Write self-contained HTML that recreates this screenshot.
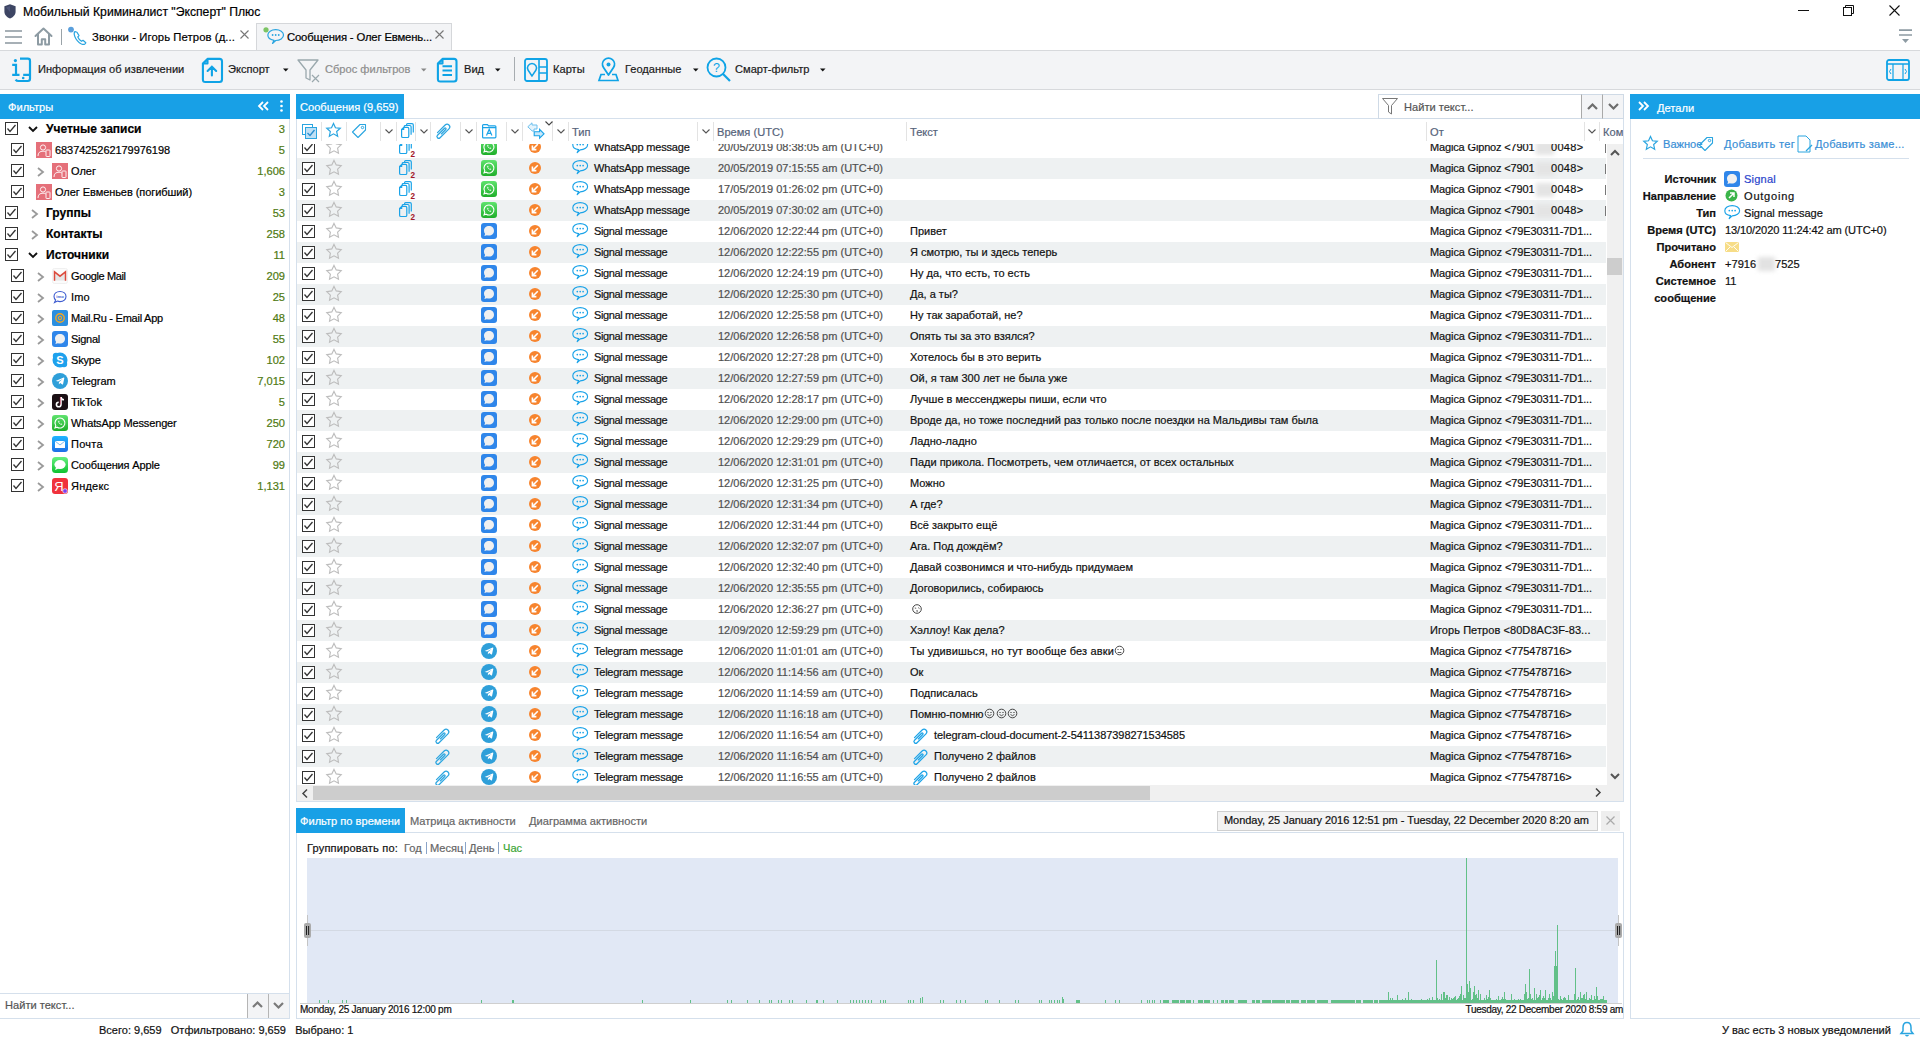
<!DOCTYPE html><html><head><meta charset="utf-8"><style>
html,body{margin:0;padding:0;}
body{width:1920px;height:1040px;position:relative;overflow:hidden;background:#fff;font-family:"Liberation Sans",sans-serif;font-size:11px;color:#000;-webkit-text-stroke:0.2px currentColor;}
div{box-sizing:border-box;}
svg{overflow:visible}
</style></head><body>
<svg style="position:absolute;left:4px;top:4px" width="12" height="15" viewBox="0 0 12 15"><path d="M6 0.3 L11.6 2.3 V7.5 C11.6 11 9 13.3 6 14.6 C3 13.3 0.4 11 0.4 7.5 V2.3 Z" fill="#3d4563"/><path d="M2 3.5 L6 2 V8 Z" fill="#5a6388" opacity="0.6"/></svg>
<div style="position:absolute;left:23px;top:4.0px;line-height:16px;font-size:12.2px;color:#000;font-weight:normal;white-space:nowrap;">Мобильный Криминалист &quot;Эксперт&quot; Плюс</div>
<div style="position:absolute;left:1798px;top:10px;width:11px;height:1px;background:#111"></div>
<svg style="position:absolute;left:1843px;top:5px" width="11" height="11" viewBox="0 0 11 11"><rect x="0.5" y="2.5" width="8" height="8" fill="none" stroke="#111"/><path d="M2.5 2.5 V0.5 H10.5 V8.5 H8.5" fill="none" stroke="#111"/></svg>
<svg style="position:absolute;left:1889px;top:5px" width="11" height="11" viewBox="0 0 11 11"><path d="M0.5 0.5 L10.5 10.5 M10.5 0.5 L0.5 10.5" stroke="#111" stroke-width="1.1"/></svg>
<svg style="position:absolute;left:5px;top:30px" width="17" height="14" viewBox="0 0 17 14"><path d="M0 1 H17 M0 7 H17 M0 13 H17" stroke="#8a979e" stroke-width="1.6"/></svg>
<svg style="position:absolute;left:34px;top:27px" width="20" height="19" viewBox="0 0 20 19"><path d="M1.5 9 L9.5 1.5 L17.5 9 M4 7 V17.5 H7.8 V12.2 H11.2 V17.5 H15 V7" fill="none" stroke="#8d9ba3" stroke-width="2" stroke-linejoin="round" stroke-linecap="round"/></svg>
<div style="position:absolute;left:61px;top:29px;width:1px;height:16px;background:#9aa3a8"></div>
<svg style="position:absolute;left:68px;top:27px" width="20" height="20" viewBox="0 0 20 20"><circle cx="3" cy="2.6" r="2.9" fill="#5a9fdc"/><path d="M7 4.5 C6 5.5 5.8 7 6.8 9.5 C8 12.5 10.5 15.5 13.5 17 C15 17.7 16.2 17.6 17 16.8 L17.8 15.8 L15 13.3 L13.5 14.3 C12 13.5 10.5 11.6 9.8 10 L11 8.6 L9 5.2 Z" fill="none" stroke="#2aa5e0" stroke-width="1.2" stroke-linejoin="round"/></svg>
<div style="position:absolute;left:92px;top:29.0px;line-height:16px;font-size:11.3px;color:#000;font-weight:normal;white-space:nowrap;letter-spacing:0.082px;">Звонки - Игорь Петров (д...</div>
<svg style="position:absolute;left:240px;top:30px" width="9" height="9" viewBox="0 0 9 9"><path d="M0.5 0.5 L8.5 8.5 M8.5 0.5 L0.5 8.5" stroke="#777" stroke-width="1.1"/></svg>
<div style="position:absolute;left:256px;top:23px;width:196px;height:28px;background:#f3f4f6;border:1px solid #d5d7da;border-bottom:none"></div>
<svg style="position:absolute;left:262px;top:26px" width="20" height="20" viewBox="0 0 20 20"><circle cx="4" cy="3.8" r="2.6" fill="#7cc464"/></svg>
<svg style="position:absolute;left:267px;top:29px" width="18" height="16" viewBox="0 0 17 15"><path d="M6.6 10.6 C3.5 10.2 0.8 8.3 0.8 5.7 C0.8 2.8 4.1 0.6 8.2 0.6 C12.3 0.6 15.6 2.8 15.6 5.7 C15.6 8.6 12.3 10.8 8.2 10.8 L5.2 13.6 Z" fill="none" stroke="#2aa5e0" stroke-width="1.15" stroke-linejoin="round"/><circle cx="5.3" cy="5.6" r="0.85" fill="#2aa5e0"/><circle cx="8.2" cy="5.6" r="0.85" fill="#2aa5e0"/><circle cx="11.1" cy="5.6" r="0.85" fill="#2aa5e0"/></svg>
<div style="position:absolute;left:287px;top:29.0px;line-height:16px;font-size:11.3px;color:#000;font-weight:normal;white-space:nowrap;letter-spacing:-0.160px;">Сообщения - Олег Евмень...</div>
<svg style="position:absolute;left:435px;top:30px" width="9" height="9" viewBox="0 0 9 9"><path d="M0.5 0.5 L8.5 8.5 M8.5 0.5 L0.5 8.5" stroke="#777" stroke-width="1.1"/></svg>
<svg style="position:absolute;left:1899px;top:29px" width="14" height="16" viewBox="0 0 14 16"><path d="M0 1.2 H13 M0 6 H13" stroke="#8d9ba3" stroke-width="1.7"/><path d="M3 10 H10 L6.5 14 Z" fill="#8d9ba3"/></svg>
<div style="position:absolute;left:0px;top:50px;width:1920px;height:40px;background:#f3f4f6;border-top:1px solid #d7d9dc;border-bottom:1px solid #d7d9dc"></div>
<svg style="position:absolute;left:11px;top:57px" width="22" height="26" viewBox="0 0 22 26"><circle cx="4.4" cy="3.6" r="1.6" fill="#0fa3e6"/><path d="M1.2 7.8 H5 V17.8 M1.2 17.8 H8.5 M12.2 17.8 H19" fill="none" stroke="#0fa3e6" stroke-width="2.2"/><path d="M9 1.7 H16.8 Q19 1.7 19 3.9 V21.8 Q19 24 16.8 24 H7.4 Q5.6 24 4.6 22.6" fill="none" stroke="#0fa3e6" stroke-width="2.2"/><circle cx="12.2" cy="21" r="1.3" fill="#0fa3e6"/></svg>
<div style="position:absolute;left:38px;top:61.0px;line-height:16px;font-size:11.1px;color:#1b1b1b;font-weight:normal;white-space:nowrap;">Информация об извлечении</div>
<svg style="position:absolute;left:201px;top:57px" width="23" height="27" viewBox="0 0 23 27"><path d="M6.5 1.9 H18.5 Q21 1.9 21 4.4 V22.5 Q21 25 18.5 25 H4.4 Q1.9 25 1.9 22.5 V6.5 Z M1.9 6.5 H6.5 V1.9" fill="none" stroke="#0fa3e6" stroke-width="2.1" stroke-linejoin="round"/><path d="M10.9 18.5 V9.8 M6.6 14 L10.9 9.7 L15.2 14" fill="none" stroke="#0fa3e6" stroke-width="2.1" stroke-linecap="round"/></svg>
<div style="position:absolute;left:228px;top:61.0px;line-height:16px;font-size:11.1px;color:#1b1b1b;font-weight:normal;white-space:nowrap;">Экспорт</div>
<svg style="position:absolute;left:282px;top:68px" width="7" height="4" viewBox="0 0 7 4"><path d="M1 0.5 H6.5 L3.75 3.5 Z" fill="#111"/></svg>
<svg style="position:absolute;left:297px;top:59px" width="24" height="23" viewBox="0 0 24 23"><path d="M1 1 H21 L13 11 V21 L9 19 V11 Z" fill="none" stroke="#9aa8ad" stroke-width="1.3" stroke-linejoin="round"/><path d="M15 16 L22 23 M22 16 L15 23" stroke="#9aa8ad" stroke-width="1.2"/></svg>
<div style="position:absolute;left:325px;top:61.0px;line-height:16px;font-size:11.1px;color:#8d8d8d;font-weight:normal;white-space:nowrap;">Сброс фильтров</div>
<svg style="position:absolute;left:420px;top:68px" width="7" height="4" viewBox="0 0 7 4"><path d="M1 0.5 H6.5 L3.75 3.5 Z" fill="#888"/></svg>
<svg style="position:absolute;left:436px;top:57px" width="23" height="27" viewBox="0 0 23 27"><path d="M6.5 1.9 H18 Q20.5 1.9 20.5 4.4 V22 Q20.5 24.5 18 24.5 H4.4 Q1.9 24.5 1.9 22 V6.5 Z M1.9 6.5 H6.5 V1.9" fill="none" stroke="#0fa3e6" stroke-width="2.1" stroke-linejoin="round"/><path d="M6.5 9.2 H16 M6.5 13.6 H16 M6.5 18 H16" stroke="#0fa3e6" stroke-width="2"/></svg>
<div style="position:absolute;left:464px;top:61.0px;line-height:16px;font-size:11.1px;color:#1b1b1b;font-weight:normal;white-space:nowrap;">Вид</div>
<svg style="position:absolute;left:494px;top:68px" width="7" height="4" viewBox="0 0 7 4"><path d="M1 0.5 H6.5 L3.75 3.5 Z" fill="#111"/></svg>
<div style="position:absolute;left:514px;top:57px;width:1px;height:24px;background:#a7acb0"></div>
<svg style="position:absolute;left:524px;top:58px" width="24" height="24" viewBox="0 0 24 24"><rect x="1" y="1" width="22" height="22" rx="2" fill="none" stroke="#0fa3e6" stroke-width="1.8"/><path d="M15 1 V23 M15 9 H23 M15 15 H23" stroke="#0fa3e6" stroke-width="1.6"/><path d="M8 18 L4 12 A4.5 4.5 0 1 1 12 12 Z" fill="none" stroke="#0fa3e6" stroke-width="1.5"/></svg>
<div style="position:absolute;left:553px;top:61.0px;line-height:16px;font-size:11.1px;color:#1b1b1b;font-weight:normal;white-space:nowrap;">Карты</div>
<svg style="position:absolute;left:598px;top:57px" width="21" height="25" viewBox="0 0 21 25"><path d="M10.5 18 L5.5 10.5 A6 6 0 1 1 15.5 10.5 Z" fill="none" stroke="#0fa3e6" stroke-width="1.8" stroke-linejoin="round"/><circle cx="10.5" cy="7.5" r="2" fill="#0fa3e6"/><path d="M7 17.5 H3 L1 23.5 H20 L18 17.5 H14" fill="none" stroke="#0fa3e6" stroke-width="1.7"/></svg>
<div style="position:absolute;left:625px;top:61.0px;line-height:16px;font-size:11.1px;color:#1b1b1b;font-weight:normal;white-space:nowrap;">Геоданные</div>
<svg style="position:absolute;left:692px;top:68px" width="7" height="4" viewBox="0 0 7 4"><path d="M1 0.5 H6.5 L3.75 3.5 Z" fill="#111"/></svg>
<svg style="position:absolute;left:706px;top:57px" width="26" height="26" viewBox="0 0 26 26"><circle cx="10.5" cy="10.5" r="9" fill="none" stroke="#0fa3e6" stroke-width="1.8"/><path d="M16.8 16.8 L24 24" stroke="#0fa3e6" stroke-width="2.2"/><text x="10.5" y="14.8" text-anchor="middle" font-family="Liberation Sans" font-size="12.5" fill="#0fa3e6">?</text></svg>
<div style="position:absolute;left:735px;top:61.0px;line-height:16px;font-size:11.1px;color:#1b1b1b;font-weight:normal;white-space:nowrap;">Смарт-фильтр</div>
<svg style="position:absolute;left:819px;top:68px" width="7" height="4" viewBox="0 0 7 4"><path d="M1 0.5 H6.5 L3.75 3.5 Z" fill="#111"/></svg>
<svg style="position:absolute;left:1886px;top:59px" width="24" height="22" viewBox="0 0 24 22"><rect x="1" y="1" width="22" height="20" rx="2" fill="none" stroke="#0fa3e6" stroke-width="1.8"/><path d="M1 5 H23" stroke="#0fa3e6" stroke-width="1.5"/><path d="M7 5 V21 M17 5 V21" stroke="#0fa3e6" stroke-width="1.2"/><path d="M5 10 L3.5 12.5 L5 15 M19 10 L20.5 12.5 L19 15" fill="none" stroke="#0fa3e6" stroke-width="1"/></svg>
<div style="position:absolute;left:0px;top:94px;width:290px;height:925px;background:#fff;border-right:1px solid #d5e0ec;border-bottom:1px solid #d5e0ec"></div>
<div style="position:absolute;left:0px;top:94px;width:290px;height:25px;background:#18a0e6"></div>
<div style="position:absolute;left:8px;top:99.0px;line-height:16px;font-size:11.1px;color:#fff;font-weight:normal;white-space:nowrap;">Фильтры</div>
<svg style="position:absolute;left:257px;top:101px" width="13" height="10" viewBox="0 0 13 10"><path d="M6 1 L2 5 L6 9 M11 1 L7 5 L11 9" fill="none" stroke="#fff" stroke-width="1.8"/></svg>
<svg style="position:absolute;left:280px;top:100px" width="3" height="12" viewBox="0 0 3 12"><circle cx="1.5" cy="1.5" r="1.3" fill="#fff"/><circle cx="1.5" cy="6" r="1.3" fill="#fff"/><circle cx="1.5" cy="10.5" r="1.3" fill="#fff"/></svg>
<svg style="position:absolute;left:5px;top:122px" width="13" height="13" viewBox="0 0 13 13"><rect x="0.5" y="0.5" width="12" height="12" fill="#fff" stroke="#333" stroke-width="1"/><path d="M2.5 6.5 L5 9.5 L10.5 3" fill="none" stroke="#333" stroke-width="1.3"/></svg>
<svg style="position:absolute;left:28px;top:126px" width="10" height="6" viewBox="0 0 10 6"><path d="M1 1 L5.0 5 L9 1" fill="none" stroke="#111" stroke-width="1.9"/></svg>
<div style="position:absolute;left:46px;top:120.5px;line-height:16px;font-size:12px;color:#000;font-weight:bold;white-space:nowrap;">Учетные записи</div>
<div style="position:absolute;right:1635px;top:120.5px;line-height:16px;font-size:11.1px;color:#4f7a12;font-weight:normal;white-space:nowrap;text-align:right;">3</div>
<svg style="position:absolute;left:11px;top:143px" width="13" height="13" viewBox="0 0 13 13"><rect x="0.5" y="0.5" width="12" height="12" fill="#fff" stroke="#333" stroke-width="1"/><path d="M2.5 6.5 L5 9.5 L10.5 3" fill="none" stroke="#333" stroke-width="1.3"/></svg>
<svg style="position:absolute;left:36px;top:142.0px" width="16" height="16" viewBox="0 0 16 16"><rect width="16" height="16" fill="#e5707a"/><circle cx="7" cy="5.5" r="2.6" fill="none" stroke="#fff" stroke-width="0.9"/><path d="M2 14 C2 10.5 4 9.2 7 9.2 C8.5 9.2 9.3 9.6 9.8 10" fill="none" stroke="#fff" stroke-width="0.9"/><rect x="10" y="8" width="4" height="6.5" rx="0.6" fill="none" stroke="#fff" stroke-width="0.9"/></svg>
<div style="position:absolute;left:55px;top:141.5px;line-height:16px;font-size:11px;color:#000;font-weight:normal;white-space:nowrap;letter-spacing:-0.066px;">6837425262179976198</div>
<div style="position:absolute;right:1635px;top:141.5px;line-height:16px;font-size:11.1px;color:#4f7a12;font-weight:normal;white-space:nowrap;text-align:right;">5</div>
<svg style="position:absolute;left:11px;top:164px" width="13" height="13" viewBox="0 0 13 13"><rect x="0.5" y="0.5" width="12" height="12" fill="#fff" stroke="#333" stroke-width="1"/><path d="M2.5 6.5 L5 9.5 L10.5 3" fill="none" stroke="#333" stroke-width="1.3"/></svg>
<svg style="position:absolute;left:37px;top:166.7px" width="7" height="10" viewBox="0 0 7 10"><path d="M1 1 L6 5.0 L1 9" fill="none" stroke="#9a9a9a" stroke-width="1.8"/></svg>
<svg style="position:absolute;left:52px;top:163.0px" width="16" height="16" viewBox="0 0 16 16"><rect width="16" height="16" fill="#e5707a"/><circle cx="7" cy="5.5" r="2.6" fill="none" stroke="#fff" stroke-width="0.9"/><path d="M2 14 C2 10.5 4 9.2 7 9.2 C8.5 9.2 9.3 9.6 9.8 10" fill="none" stroke="#fff" stroke-width="0.9"/><rect x="10" y="8" width="4" height="6.5" rx="0.6" fill="none" stroke="#fff" stroke-width="0.9"/></svg>
<div style="position:absolute;left:71px;top:162.5px;line-height:16px;font-size:11px;color:#000;font-weight:normal;white-space:nowrap;">Олег</div>
<div style="position:absolute;right:1635px;top:162.5px;line-height:16px;font-size:11.1px;color:#4f7a12;font-weight:normal;white-space:nowrap;text-align:right;">1,606</div>
<svg style="position:absolute;left:11px;top:185px" width="13" height="13" viewBox="0 0 13 13"><rect x="0.5" y="0.5" width="12" height="12" fill="#fff" stroke="#333" stroke-width="1"/><path d="M2.5 6.5 L5 9.5 L10.5 3" fill="none" stroke="#333" stroke-width="1.3"/></svg>
<svg style="position:absolute;left:36px;top:184.0px" width="16" height="16" viewBox="0 0 16 16"><rect width="16" height="16" fill="#e5707a"/><circle cx="7" cy="5.5" r="2.6" fill="none" stroke="#fff" stroke-width="0.9"/><path d="M2 14 C2 10.5 4 9.2 7 9.2 C8.5 9.2 9.3 9.6 9.8 10" fill="none" stroke="#fff" stroke-width="0.9"/><rect x="10" y="8" width="4" height="6.5" rx="0.6" fill="none" stroke="#fff" stroke-width="0.9"/></svg>
<div style="position:absolute;left:55px;top:183.5px;line-height:16px;font-size:11px;color:#000;font-weight:normal;white-space:nowrap;letter-spacing:-0.066px;">Олег Евменьев (погибший)</div>
<div style="position:absolute;right:1635px;top:183.5px;line-height:16px;font-size:11.1px;color:#4f7a12;font-weight:normal;white-space:nowrap;text-align:right;">3</div>
<svg style="position:absolute;left:5px;top:206px" width="13" height="13" viewBox="0 0 13 13"><rect x="0.5" y="0.5" width="12" height="12" fill="#fff" stroke="#333" stroke-width="1"/><path d="M2.5 6.5 L5 9.5 L10.5 3" fill="none" stroke="#333" stroke-width="1.3"/></svg>
<svg style="position:absolute;left:31px;top:208.7px" width="7" height="10" viewBox="0 0 7 10"><path d="M1 1 L6 5.0 L1 9" fill="none" stroke="#9a9a9a" stroke-width="1.8"/></svg>
<div style="position:absolute;left:46px;top:204.5px;line-height:16px;font-size:12px;color:#000;font-weight:bold;white-space:nowrap;">Группы</div>
<div style="position:absolute;right:1635px;top:204.5px;line-height:16px;font-size:11.1px;color:#4f7a12;font-weight:normal;white-space:nowrap;text-align:right;">53</div>
<svg style="position:absolute;left:5px;top:227px" width="13" height="13" viewBox="0 0 13 13"><rect x="0.5" y="0.5" width="12" height="12" fill="#fff" stroke="#333" stroke-width="1"/><path d="M2.5 6.5 L5 9.5 L10.5 3" fill="none" stroke="#333" stroke-width="1.3"/></svg>
<svg style="position:absolute;left:31px;top:229.7px" width="7" height="10" viewBox="0 0 7 10"><path d="M1 1 L6 5.0 L1 9" fill="none" stroke="#9a9a9a" stroke-width="1.8"/></svg>
<div style="position:absolute;left:46px;top:225.5px;line-height:16px;font-size:12px;color:#000;font-weight:bold;white-space:nowrap;">Контакты</div>
<div style="position:absolute;right:1635px;top:225.5px;line-height:16px;font-size:11.1px;color:#4f7a12;font-weight:normal;white-space:nowrap;text-align:right;">258</div>
<svg style="position:absolute;left:5px;top:248px" width="13" height="13" viewBox="0 0 13 13"><rect x="0.5" y="0.5" width="12" height="12" fill="#fff" stroke="#333" stroke-width="1"/><path d="M2.5 6.5 L5 9.5 L10.5 3" fill="none" stroke="#333" stroke-width="1.3"/></svg>
<svg style="position:absolute;left:28px;top:252px" width="10" height="6" viewBox="0 0 10 6"><path d="M1 1 L5.0 5 L9 1" fill="none" stroke="#111" stroke-width="1.9"/></svg>
<div style="position:absolute;left:46px;top:246.5px;line-height:16px;font-size:12px;color:#000;font-weight:bold;white-space:nowrap;">Источники</div>
<div style="position:absolute;right:1635px;top:246.5px;line-height:16px;font-size:11.1px;color:#4f7a12;font-weight:normal;white-space:nowrap;text-align:right;">11</div>
<svg style="position:absolute;left:11px;top:269px" width="13" height="13" viewBox="0 0 13 13"><rect x="0.5" y="0.5" width="12" height="12" fill="#fff" stroke="#333" stroke-width="1"/><path d="M2.5 6.5 L5 9.5 L10.5 3" fill="none" stroke="#333" stroke-width="1.3"/></svg>
<svg style="position:absolute;left:37px;top:271.7px" width="7" height="10" viewBox="0 0 7 10"><path d="M1 1 L6 5.0 L1 9" fill="none" stroke="#9a9a9a" stroke-width="1.8"/></svg>
<svg style="position:absolute;left:52px;top:268.0px" width="16" height="16" viewBox="0 0 16 16"><rect x="0.5" y="0.5" width="15" height="15" rx="2" fill="#fbfbfb" stroke="#f0f0f0"/><path d="M2.5 4.5 L8 8.8 L13.5 4.5 V12.5 H2.5 Z" fill="#e6e6e6"/><path d="M2.5 12.8 V3.8 L8 8.2 L13.5 3.8 V12.8" fill="none" stroke="#dc4a3c" stroke-width="1.5" stroke-linejoin="miter"/></svg>
<div style="position:absolute;left:71px;top:267.5px;line-height:16px;font-size:11px;color:#000;font-weight:normal;white-space:nowrap;letter-spacing:-0.373px;">Google Mail</div>
<div style="position:absolute;right:1635px;top:267.5px;line-height:16px;font-size:11.1px;color:#4f7a12;font-weight:normal;white-space:nowrap;text-align:right;">209</div>
<svg style="position:absolute;left:11px;top:290px" width="13" height="13" viewBox="0 0 13 13"><rect x="0.5" y="0.5" width="12" height="12" fill="#fff" stroke="#333" stroke-width="1"/><path d="M2.5 6.5 L5 9.5 L10.5 3" fill="none" stroke="#333" stroke-width="1.3"/></svg>
<svg style="position:absolute;left:37px;top:292.7px" width="7" height="10" viewBox="0 0 7 10"><path d="M1 1 L6 5.0 L1 9" fill="none" stroke="#9a9a9a" stroke-width="1.8"/></svg>
<svg style="position:absolute;left:52px;top:289.0px" width="16" height="16" viewBox="0 0 16 16"><path d="M8 2.5 C11.6 2.5 14 4.8 14 7.6 C14 10.4 11.6 12.6 8 12.6 C7 12.6 6.1 12.4 5.4 12.1 L2.5 13.5 L3.6 11 C2.6 10.1 2 9 2 7.6 C2 4.8 4.4 2.5 8 2.5 Z" fill="none" stroke="#3d5bd0" stroke-width="1.1"/><text x="8" y="9.3" text-anchor="middle" font-family="Liberation Sans" font-size="4.2" font-weight="bold" fill="#3d5bd0">imo</text></svg>
<div style="position:absolute;left:71px;top:288.5px;line-height:16px;font-size:11px;color:#000;font-weight:normal;white-space:nowrap;letter-spacing:0.152px;">Imo</div>
<div style="position:absolute;right:1635px;top:288.5px;line-height:16px;font-size:11.1px;color:#4f7a12;font-weight:normal;white-space:nowrap;text-align:right;">25</div>
<svg style="position:absolute;left:11px;top:311px" width="13" height="13" viewBox="0 0 13 13"><rect x="0.5" y="0.5" width="12" height="12" fill="#fff" stroke="#333" stroke-width="1"/><path d="M2.5 6.5 L5 9.5 L10.5 3" fill="none" stroke="#333" stroke-width="1.3"/></svg>
<svg style="position:absolute;left:37px;top:313.7px" width="7" height="10" viewBox="0 0 7 10"><path d="M1 1 L6 5.0 L1 9" fill="none" stroke="#9a9a9a" stroke-width="1.8"/></svg>
<svg style="position:absolute;left:52px;top:310.0px" width="16" height="16" viewBox="0 0 16 16"><rect width="16" height="16" rx="2" fill="#2b8fe0"/><circle cx="8" cy="8" r="4.2" fill="none" stroke="#f5a623" stroke-width="1.4"/><circle cx="8" cy="8" r="1.6" fill="none" stroke="#f5a623" stroke-width="1.1"/></svg>
<div style="position:absolute;left:71px;top:309.5px;line-height:16px;font-size:11px;color:#000;font-weight:normal;white-space:nowrap;letter-spacing:-0.247px;">Mail.Ru - Email App</div>
<div style="position:absolute;right:1635px;top:309.5px;line-height:16px;font-size:11.1px;color:#4f7a12;font-weight:normal;white-space:nowrap;text-align:right;">48</div>
<svg style="position:absolute;left:11px;top:332px" width="13" height="13" viewBox="0 0 13 13"><rect x="0.5" y="0.5" width="12" height="12" fill="#fff" stroke="#333" stroke-width="1"/><path d="M2.5 6.5 L5 9.5 L10.5 3" fill="none" stroke="#333" stroke-width="1.3"/></svg>
<svg style="position:absolute;left:37px;top:334.7px" width="7" height="10" viewBox="0 0 7 10"><path d="M1 1 L6 5.0 L1 9" fill="none" stroke="#9a9a9a" stroke-width="1.8"/></svg>
<svg style="position:absolute;left:52px;top:331.0px" width="16" height="16" viewBox="0 0 16 16"><rect x="0" y="0" width="16" height="16" rx="3" fill="#2f86ea"/><path d="M8 3 C10.9 3 13 5 13 7.8 C13 10.6 10.9 12.6 8 12.6 C7.2 12.6 6.5 12.45 5.9 12.2 L3.4 13 L4.1 10.8 C3.4 10 3 9 3 7.8 C3 5 5.1 3 8 3 Z" fill="#f0f0f0"/></svg>
<div style="position:absolute;left:71px;top:330.5px;line-height:16px;font-size:11px;color:#000;font-weight:normal;white-space:nowrap;letter-spacing:-0.280px;">Signal</div>
<div style="position:absolute;right:1635px;top:330.5px;line-height:16px;font-size:11.1px;color:#4f7a12;font-weight:normal;white-space:nowrap;text-align:right;">55</div>
<svg style="position:absolute;left:11px;top:353px" width="13" height="13" viewBox="0 0 13 13"><rect x="0.5" y="0.5" width="12" height="12" fill="#fff" stroke="#333" stroke-width="1"/><path d="M2.5 6.5 L5 9.5 L10.5 3" fill="none" stroke="#333" stroke-width="1.3"/></svg>
<svg style="position:absolute;left:37px;top:355.7px" width="7" height="10" viewBox="0 0 7 10"><path d="M1 1 L6 5.0 L1 9" fill="none" stroke="#9a9a9a" stroke-width="1.8"/></svg>
<svg style="position:absolute;left:52px;top:352.0px" width="16" height="16" viewBox="0 0 16 16"><circle cx="8" cy="8" r="7.5" fill="#1ea1ed"/><circle cx="4" cy="4" r="3.2" fill="#1ea1ed"/><circle cx="12" cy="12" r="3.2" fill="#1ea1ed"/><text x="8" y="12" text-anchor="middle" font-family="Liberation Sans" font-size="11" font-weight="bold" fill="#fff">S</text></svg>
<div style="position:absolute;left:71px;top:351.5px;line-height:16px;font-size:11px;color:#000;font-weight:normal;white-space:nowrap;letter-spacing:-0.156px;">Skype</div>
<div style="position:absolute;right:1635px;top:351.5px;line-height:16px;font-size:11.1px;color:#4f7a12;font-weight:normal;white-space:nowrap;text-align:right;">102</div>
<svg style="position:absolute;left:11px;top:374px" width="13" height="13" viewBox="0 0 13 13"><rect x="0.5" y="0.5" width="12" height="12" fill="#fff" stroke="#333" stroke-width="1"/><path d="M2.5 6.5 L5 9.5 L10.5 3" fill="none" stroke="#333" stroke-width="1.3"/></svg>
<svg style="position:absolute;left:37px;top:376.7px" width="7" height="10" viewBox="0 0 7 10"><path d="M1 1 L6 5.0 L1 9" fill="none" stroke="#9a9a9a" stroke-width="1.8"/></svg>
<svg style="position:absolute;left:52px;top:373.0px" width="16" height="16" viewBox="0 0 16 16"><circle cx="8" cy="8" r="8" fill="#2e9fd9"/><path d="M3.6 7.9 L11.7 4.6 C12.1 4.5 12.4 4.7 12.3 5.2 L11 11.2 C10.9 11.6 10.6 11.7 10.3 11.5 L8.2 10 L7.2 11 C7.1 11.1 7 11.2 6.8 11.2 L7 9.1 L10.6 5.9 L6.1 8.6 L4 8 C3.5 7.9 3.5 8.1 3.6 7.9Z" fill="#fff"/></svg>
<div style="position:absolute;left:71px;top:372.5px;line-height:16px;font-size:11px;color:#000;font-weight:normal;white-space:nowrap;letter-spacing:-0.094px;">Telegram</div>
<div style="position:absolute;right:1635px;top:372.5px;line-height:16px;font-size:11.1px;color:#4f7a12;font-weight:normal;white-space:nowrap;text-align:right;">7,015</div>
<svg style="position:absolute;left:11px;top:395px" width="13" height="13" viewBox="0 0 13 13"><rect x="0.5" y="0.5" width="12" height="12" fill="#fff" stroke="#333" stroke-width="1"/><path d="M2.5 6.5 L5 9.5 L10.5 3" fill="none" stroke="#333" stroke-width="1.3"/></svg>
<svg style="position:absolute;left:37px;top:397.7px" width="7" height="10" viewBox="0 0 7 10"><path d="M1 1 L6 5.0 L1 9" fill="none" stroke="#9a9a9a" stroke-width="1.8"/></svg>
<svg style="position:absolute;left:52px;top:394.0px" width="16" height="16" viewBox="0 0 16 16"><rect width="16" height="16" rx="3" fill="#1a0f14"/><path d="M9 3 V10.5 A2.3 2.3 0 1 1 6.7 8.2" fill="none" stroke="#fff" stroke-width="1.6"/><path d="M9 3.2 C9.4 4.8 10.5 5.7 12 5.8" fill="none" stroke="#fff" stroke-width="1.5"/><path d="M8.3 3 V10.5" stroke="#ee1d52" stroke-width="0.5"/></svg>
<div style="position:absolute;left:71px;top:393.5px;line-height:16px;font-size:11px;color:#000;font-weight:normal;white-space:nowrap;letter-spacing:-0.096px;">TikTok</div>
<div style="position:absolute;right:1635px;top:393.5px;line-height:16px;font-size:11.1px;color:#4f7a12;font-weight:normal;white-space:nowrap;text-align:right;">5</div>
<svg style="position:absolute;left:11px;top:416px" width="13" height="13" viewBox="0 0 13 13"><rect x="0.5" y="0.5" width="12" height="12" fill="#fff" stroke="#333" stroke-width="1"/><path d="M2.5 6.5 L5 9.5 L10.5 3" fill="none" stroke="#333" stroke-width="1.3"/></svg>
<svg style="position:absolute;left:37px;top:418.7px" width="7" height="10" viewBox="0 0 7 10"><path d="M1 1 L6 5.0 L1 9" fill="none" stroke="#9a9a9a" stroke-width="1.8"/></svg>
<svg style="position:absolute;left:52px;top:415.0px" width="16" height="16" viewBox="0 0 16 16"><defs><linearGradient id="wg" x1="0" y1="0" x2="0" y2="1"><stop offset="0" stop-color="#5fe36e"/><stop offset="1" stop-color="#1fae2a"/></linearGradient></defs><rect x="0" y="0" width="16" height="16" rx="3" fill="url(#wg)"/><path d="M8 3 A5 5 0 1 1 5.2 12.2 L3 12.9 L3.8 10.8 A5 5 0 0 1 8 3 Z" fill="none" stroke="#fff" stroke-width="1.1"/><path d="M6.2 6 C6.2 8 8 9.8 10 9.8 L10.3 9 L9.3 8.5 L8.8 9 C8 8.6 7.4 8 7 7.2 L7.5 6.7 L7 5.7 Z" fill="#fff"/></svg>
<div style="position:absolute;left:71px;top:414.5px;line-height:16px;font-size:11px;color:#000;font-weight:normal;white-space:nowrap;letter-spacing:-0.145px;">WhatsApp Messenger</div>
<div style="position:absolute;right:1635px;top:414.5px;line-height:16px;font-size:11.1px;color:#4f7a12;font-weight:normal;white-space:nowrap;text-align:right;">250</div>
<svg style="position:absolute;left:11px;top:437px" width="13" height="13" viewBox="0 0 13 13"><rect x="0.5" y="0.5" width="12" height="12" fill="#fff" stroke="#333" stroke-width="1"/><path d="M2.5 6.5 L5 9.5 L10.5 3" fill="none" stroke="#333" stroke-width="1.3"/></svg>
<svg style="position:absolute;left:37px;top:439.7px" width="7" height="10" viewBox="0 0 7 10"><path d="M1 1 L6 5.0 L1 9" fill="none" stroke="#9a9a9a" stroke-width="1.8"/></svg>
<svg style="position:absolute;left:52px;top:436.0px" width="16" height="16" viewBox="0 0 16 16"><defs><linearGradient id="pg" x1="0" y1="0" x2="0" y2="1"><stop offset="0" stop-color="#1fb6ff"/><stop offset="1" stop-color="#1e6ee6"/></linearGradient></defs><rect width="16" height="16" rx="3" fill="url(#pg)"/><rect x="3" y="5" width="10" height="7" fill="#fff"/><path d="M3 5 L8 9 L13 5" fill="none" stroke="#5aa9f0" stroke-width="0.8"/></svg>
<div style="position:absolute;left:71px;top:435.5px;line-height:16px;font-size:11px;color:#000;font-weight:normal;white-space:nowrap;letter-spacing:0.251px;">Почта</div>
<div style="position:absolute;right:1635px;top:435.5px;line-height:16px;font-size:11.1px;color:#4f7a12;font-weight:normal;white-space:nowrap;text-align:right;">720</div>
<svg style="position:absolute;left:11px;top:458px" width="13" height="13" viewBox="0 0 13 13"><rect x="0.5" y="0.5" width="12" height="12" fill="#fff" stroke="#333" stroke-width="1"/><path d="M2.5 6.5 L5 9.5 L10.5 3" fill="none" stroke="#333" stroke-width="1.3"/></svg>
<svg style="position:absolute;left:37px;top:460.7px" width="7" height="10" viewBox="0 0 7 10"><path d="M1 1 L6 5.0 L1 9" fill="none" stroke="#9a9a9a" stroke-width="1.8"/></svg>
<svg style="position:absolute;left:52px;top:457.0px" width="16" height="16" viewBox="0 0 16 16"><defs><linearGradient id="ag" x1="0" y1="0" x2="0" y2="1"><stop offset="0" stop-color="#66f080"/><stop offset="1" stop-color="#0ec12f"/></linearGradient></defs><rect width="16" height="16" rx="3.5" fill="url(#ag)"/><ellipse cx="8" cy="7.6" rx="5.6" ry="4.5" fill="#fff"/><path d="M4 10.5 L3 13 L6.5 11.5 Z" fill="#fff"/></svg>
<div style="position:absolute;left:71px;top:456.5px;line-height:16px;font-size:11px;color:#000;font-weight:normal;white-space:nowrap;letter-spacing:-0.146px;">Сообщения Apple</div>
<div style="position:absolute;right:1635px;top:456.5px;line-height:16px;font-size:11.1px;color:#4f7a12;font-weight:normal;white-space:nowrap;text-align:right;">99</div>
<svg style="position:absolute;left:11px;top:479px" width="13" height="13" viewBox="0 0 13 13"><rect x="0.5" y="0.5" width="12" height="12" fill="#fff" stroke="#333" stroke-width="1"/><path d="M2.5 6.5 L5 9.5 L10.5 3" fill="none" stroke="#333" stroke-width="1.3"/></svg>
<svg style="position:absolute;left:37px;top:481.7px" width="7" height="10" viewBox="0 0 7 10"><path d="M1 1 L6 5.0 L1 9" fill="none" stroke="#9a9a9a" stroke-width="1.8"/></svg>
<svg style="position:absolute;left:52px;top:478.0px" width="16" height="16" viewBox="0 0 16 16"><rect width="16" height="16" rx="3" fill="#f0323c"/><text x="7" y="13" text-anchor="middle" font-family="Liberation Sans" font-size="13" fill="#fff">Я</text><circle cx="13" cy="13" r="2.3" fill="#7b3ff2" stroke="#fff" stroke-width="0.6"/></svg>
<div style="position:absolute;left:71px;top:477.5px;line-height:16px;font-size:11px;color:#000;font-weight:normal;white-space:nowrap;letter-spacing:0.217px;">Яндекс</div>
<div style="position:absolute;right:1635px;top:477.5px;line-height:16px;font-size:11.1px;color:#4f7a12;font-weight:normal;white-space:nowrap;text-align:right;">1,131</div>
<div style="position:absolute;left:0px;top:993px;width:289px;height:25px;border-top:1px solid #d5e0ec;background:#fff"></div>
<div style="position:absolute;left:5px;top:997.0px;line-height:16px;font-size:11.1px;color:#555;font-weight:normal;white-space:nowrap;">Найти текст...</div>
<div style="position:absolute;left:247px;top:994px;width:21px;height:24px;background:#f3f4f6;border-left:1px solid #b5b5b5"></div>
<div style="position:absolute;left:268px;top:994px;width:21px;height:24px;background:#f3f4f6;border-left:1px solid #b5b5b5"></div>
<svg style="position:absolute;left:252px;top:1001px" width="11" height="7" viewBox="0 0 11 7"><path d="M1 6 L5.5 1.5 L10 6" fill="none" stroke="#7a7a7a" stroke-width="2.2"/></svg>
<svg style="position:absolute;left:273px;top:1002px" width="11" height="7" viewBox="0 0 11 7"><path d="M1 1 L5.5 5.5 L10 1" fill="none" stroke="#7a7a7a" stroke-width="2.2"/></svg>
<div style="position:absolute;left:296px;top:118px;width:1328px;height:684px;background:#fff;border:1px solid #d5e0ec;"></div>
<div style="position:absolute;left:296px;top:94px;width:108px;height:25px;background:#18a0e6"></div>
<div style="position:absolute;left:300px;top:99.0px;line-height:16px;font-size:11.1px;color:#fff;font-weight:normal;white-space:nowrap;">Сообщения (9,659)</div>
<div style="position:absolute;left:1378px;top:94px;width:246px;height:25px;background:#fff;border:1px solid #cfdae6"></div>
<svg style="position:absolute;left:1382px;top:98px" width="16" height="17" viewBox="0 0 16 17"><path d="M0.5 0.5 H15.5 L9.5 7.5 V16 L6.5 14 V7.5 Z" fill="none" stroke="#777" stroke-width="1" stroke-linejoin="round"/></svg>
<div style="position:absolute;left:1404px;top:98.5px;line-height:16px;font-size:11.1px;color:#555;font-weight:normal;white-space:nowrap;">Найти текст...</div>
<div style="position:absolute;left:1581px;top:94px;width:22px;height:25px;background:#f3f4f6;border-left:1px solid #a9a9a9;border-top:1px solid #cfdae6;border-bottom:1px solid #cfdae6"></div>
<div style="position:absolute;left:1602px;top:94px;width:22px;height:25px;background:#f3f4f6;border:1px solid #cfdae6;border-left:1px solid #a9a9a9"></div>
<svg style="position:absolute;left:1587px;top:103px" width="11" height="7" viewBox="0 0 11 7"><path d="M1 6 L5.5 1.5 L10 6" fill="none" stroke="#6d6d6d" stroke-width="2.2"/></svg>
<svg style="position:absolute;left:1608px;top:103px" width="11" height="7" viewBox="0 0 11 7"><path d="M1 1 L5.5 5.5 L10 1" fill="none" stroke="#6d6d6d" stroke-width="2.2"/></svg>
<div style="position:absolute;left:321px;top:122px;width:1px;height:19px;background:#e3e3e3"></div>
<div style="position:absolute;left:346px;top:122px;width:1px;height:19px;background:#e3e3e3"></div>
<div style="position:absolute;left:380px;top:122px;width:1px;height:19px;background:#e3e3e3"></div>
<div style="position:absolute;left:396px;top:122px;width:1px;height:19px;background:#e3e3e3"></div>
<div style="position:absolute;left:415px;top:122px;width:1px;height:19px;background:#e3e3e3"></div>
<div style="position:absolute;left:430px;top:122px;width:1px;height:19px;background:#e3e3e3"></div>
<div style="position:absolute;left:460px;top:122px;width:1px;height:19px;background:#e3e3e3"></div>
<div style="position:absolute;left:476px;top:122px;width:1px;height:19px;background:#e3e3e3"></div>
<div style="position:absolute;left:506px;top:122px;width:1px;height:19px;background:#e3e3e3"></div>
<div style="position:absolute;left:522px;top:122px;width:1px;height:19px;background:#e3e3e3"></div>
<div style="position:absolute;left:552px;top:122px;width:1px;height:19px;background:#e3e3e3"></div>
<div style="position:absolute;left:568px;top:122px;width:1px;height:19px;background:#e3e3e3"></div>
<div style="position:absolute;left:697px;top:122px;width:1px;height:19px;background:#e3e3e3"></div>
<div style="position:absolute;left:713px;top:122px;width:1px;height:19px;background:#e3e3e3"></div>
<div style="position:absolute;left:906px;top:122px;width:1px;height:19px;background:#e3e3e3"></div>
<div style="position:absolute;left:1426px;top:122px;width:1px;height:19px;background:#e3e3e3"></div>
<div style="position:absolute;left:1584px;top:122px;width:1px;height:19px;background:#e3e3e3"></div>
<div style="position:absolute;left:1599px;top:122px;width:1px;height:19px;background:#e3e3e3"></div>
<svg style="position:absolute;left:302px;top:124px" width="15" height="15" viewBox="0 0 15 15"><rect x="0.5" y="0.5" width="10" height="10" fill="none" stroke="#2aa5e0" stroke-width="1"/><rect x="3.5" y="3.5" width="11" height="11" fill="#bfe0f5" stroke="#2aa5e0" stroke-width="1"/><path d="M5.5 9 L8 11.5 L12.5 6" fill="none" stroke="#2a8fd0" stroke-width="1.4"/></svg>
<svg style="position:absolute;left:326px;top:123px" width="15" height="15" viewBox="0 0 15 15"><polygon points="7.50,0.40 9.46,4.80 14.25,5.31 10.67,8.53 11.67,13.24 7.50,10.84 3.33,13.24 4.33,8.53 0.75,5.31 5.54,4.80" fill="none" stroke="#2aa5e0" stroke-width="1.2" stroke-linejoin="miter"/></svg>
<svg style="position:absolute;left:351px;top:123px" width="16" height="16" viewBox="0 0 16 16"><path d="M14.5 1.5 H9 L1.5 9 L7 14.5 L14.5 7 Z" fill="none" stroke="#2aa5e0" stroke-width="1.1" stroke-linejoin="round"/><circle cx="11.5" cy="4.5" r="1.2" fill="none" stroke="#2aa5e0" stroke-width="1"/></svg>
<svg style="position:absolute;left:384.5px;top:129px" width="8" height="5" viewBox="0 0 8 5"><path d="M0.5 0.5 L4 4 L7.5 0.5" fill="none" stroke="#555" stroke-width="1.1"/></svg>
<svg style="position:absolute;left:419.5px;top:129px" width="8" height="5" viewBox="0 0 8 5"><path d="M0.5 0.5 L4 4 L7.5 0.5" fill="none" stroke="#555" stroke-width="1.1"/></svg>
<svg style="position:absolute;left:464.5px;top:129px" width="8" height="5" viewBox="0 0 8 5"><path d="M0.5 0.5 L4 4 L7.5 0.5" fill="none" stroke="#555" stroke-width="1.1"/></svg>
<svg style="position:absolute;left:510.5px;top:129px" width="8" height="5" viewBox="0 0 8 5"><path d="M0.5 0.5 L4 4 L7.5 0.5" fill="none" stroke="#555" stroke-width="1.1"/></svg>
<svg style="position:absolute;left:556.5px;top:129px" width="8" height="5" viewBox="0 0 8 5"><path d="M0.5 0.5 L4 4 L7.5 0.5" fill="none" stroke="#555" stroke-width="1.1"/></svg>
<svg style="position:absolute;left:701.5px;top:129px" width="8" height="5" viewBox="0 0 8 5"><path d="M0.5 0.5 L4 4 L7.5 0.5" fill="none" stroke="#555" stroke-width="1.1"/></svg>
<svg style="position:absolute;left:1587.5px;top:129px" width="8" height="5" viewBox="0 0 8 5"><path d="M0.5 0.5 L4 4 L7.5 0.5" fill="none" stroke="#555" stroke-width="1.1"/></svg>
<svg style="position:absolute;left:400px;top:123px" width="18" height="18" viewBox="0 0 18 18"><path d="M3.7 4.4 H7.5 Q8.8 4.4 8.8 5.7 V13.2 Q8.8 14.5 7.5 14.5 H2.9 Q1.6 14.5 1.6 13.2 V6.5 Z M1.6 6.5 H3.7 V4.4" fill="none" stroke="#1aa3e8" stroke-width="1.2" stroke-linejoin="round"/><path d="M4.3 4.2 V3.5 Q4.3 2.5 5.3 2.5 H9.8 Q11.1 2.5 11.1 3.8 V11.8" fill="none" stroke="#1aa3e8" stroke-width="1.2"/><path d="M6.6 2.2 V1.8 Q6.6 0.7 7.7 0.7 H12 Q13.3 0.7 13.3 2 V9.5" fill="none" stroke="#1aa3e8" stroke-width="1.2"/></svg>
<svg style="position:absolute;left:435px;top:123px" width="16" height="16" viewBox="0 0 16 16"><path transform="translate(7.6 8.4) rotate(-45) scale(0.9)" d="M-5 -3 H7 A3 3 0 0 1 7 3 H-7 A2 2 0 0 1 -7 -1 H4 A1 1 0 0 1 4 1 H-3" fill="none" stroke="#2aa5e0" stroke-width="1.35" stroke-linecap="round"/></svg>
<svg style="position:absolute;left:481px;top:123px" width="16" height="16" viewBox="0 0 16 16"><path d="M1.6 2.5 Q1.6 1.6 2.5 1.6 H6.5 L7.5 2.8 H14 Q14.9 2.8 14.9 3.7 V13.8 Q14.9 14.8 14 14.8 H2.5 Q1.6 14.8 1.6 13.9 Z M1.6 4.6 H14.9" fill="none" stroke="#1aa3e8" stroke-width="1.2" stroke-linejoin="round"/><path d="M5.5 12.5 L8.2 6.2 L10.9 12.5 M6.5 10.4 H9.9" fill="none" stroke="#1aa3e8" stroke-width="1.2"/></svg>
<svg style="position:absolute;left:527px;top:122px" width="18" height="18" viewBox="0 0 18 18"><path d="M0.8 4.8 L5 0.8 V3 H10 V7 H7 V9 L5 9 V8.8 Z" fill="#e6f4fc" stroke="#6cc0ee" stroke-width="1"/><path d="M17 11.8 L12.6 16.2 V13.8 H7.2 V9.8 H12.6 V7.4 Z" fill="#c8e8fa" stroke="#1aa3e8" stroke-width="1.1" stroke-linejoin="miter"/></svg>
<svg style="position:absolute;left:545px;top:121px" width="8" height="5" viewBox="0 0 8 5"><path d="M0.5 0.5 L4 4 L7.5 0.5" fill="none" stroke="#444" stroke-width="1.1"/></svg>
<div style="position:absolute;left:572px;top:124.0px;line-height:16px;font-size:11.1px;color:#56637a;font-weight:normal;white-space:nowrap;">Тип</div>
<div style="position:absolute;left:717px;top:124.0px;line-height:16px;font-size:11.1px;color:#56637a;font-weight:normal;white-space:nowrap;">Время (UTC)</div>
<div style="position:absolute;left:910px;top:124.0px;line-height:16px;font-size:11.1px;color:#56637a;font-weight:normal;white-space:nowrap;">Текст</div>
<div style="position:absolute;left:1430px;top:124.0px;line-height:16px;font-size:11.1px;color:#56637a;font-weight:normal;white-space:nowrap;">От</div>
<div style="position:absolute;left:1603px;top:124.0px;line-height:16px;font-size:11.1px;color:#56637a;font-weight:normal;white-space:nowrap;width:20px;overflow:hidden">Ком</div>
<div style="position:absolute;left:297px;top:144px;width:1309px;height:641px;overflow:hidden">
<div style="position:absolute;left:0;top:-7px;width:1309px;height:21px;background:#fff">
<svg style="position:absolute;left:5px;top:4px" width="13" height="13" viewBox="0 0 13 13"><rect x="0.5" y="0.5" width="12" height="12" fill="#fff" stroke="#333" stroke-width="1"/><path d="M2.5 6.5 L5 9.5 L10.5 3" fill="none" stroke="#333" stroke-width="1.3"/></svg>
<svg style="position:absolute;left:28.80000000000001px;top:1.9px" width="16" height="16" viewBox="0 0 16 16"><polygon points="8.00,0.40 10.23,4.93 15.23,5.65 11.61,9.17 12.47,14.15 8.00,11.80 3.53,14.15 4.39,9.17 0.77,5.65 5.77,4.93" fill="none" stroke="#bdbdbd" stroke-width="1.15" stroke-linejoin="miter"/></svg>
<svg style="position:absolute;left:101px;top:2px" width="18" height="18" viewBox="0 0 18 18"><path d="M3.7 4.4 H7.5 Q8.8 4.4 8.8 5.7 V13.2 Q8.8 14.5 7.5 14.5 H2.9 Q1.6 14.5 1.6 13.2 V6.5 Z M1.6 6.5 H3.7 V4.4" fill="none" stroke="#1aa3e8" stroke-width="1.2" stroke-linejoin="round"/><path d="M4.3 4.2 V3.5 Q4.3 2.5 5.3 2.5 H9.8 Q11.1 2.5 11.1 3.8 V11.8" fill="none" stroke="#1aa3e8" stroke-width="1.2"/><path d="M6.6 2.2 V1.8 Q6.6 0.7 7.7 0.7 H12 Q13.3 0.7 13.3 2 V9.5" fill="none" stroke="#1aa3e8" stroke-width="1.2"/><text x="12.6" y="18.3" font-family="Liberation Sans" font-size="8.2" font-weight="bold" fill="#a3172a">2</text></svg>
<svg style="position:absolute;left:184px;top:2px" width="16" height="16" viewBox="0 0 16 16"><defs><linearGradient id="wg" x1="0" y1="0" x2="0" y2="1"><stop offset="0" stop-color="#5fe36e"/><stop offset="1" stop-color="#1fae2a"/></linearGradient></defs><rect x="0" y="0" width="16" height="16" rx="3" fill="url(#wg)"/><path d="M8 3 A5 5 0 1 1 5.2 12.2 L3 12.9 L3.8 10.8 A5 5 0 0 1 8 3 Z" fill="none" stroke="#fff" stroke-width="1.1"/><path d="M6.2 6 C6.2 8 8 9.8 10 9.8 L10.3 9 L9.3 8.5 L8.8 9 C8 8.6 7.4 8 7 7.2 L7.5 6.7 L7 5.7 Z" fill="#fff"/></svg>
<svg style="position:absolute;left:232px;top:4px" width="12" height="12" viewBox="0 0 12 12"><circle cx="6" cy="6" r="6" fill="#f7842e"/><path d="M8.8 3.2 L3.8 8.2 M3.4 4.6 V8.6 H7.4" fill="none" stroke="#fff" stroke-width="1.6"/></svg>
<svg style="position:absolute;left:275px;top:2px" width="17" height="15" viewBox="0 0 17 15"><path d="M6.6 10.6 C3.5 10.2 0.8 8.3 0.8 5.7 C0.8 2.8 4.1 0.6 8.2 0.6 C12.3 0.6 15.6 2.8 15.6 5.7 C15.6 8.6 12.3 10.8 8.2 10.8 L5.2 13.6 Z" fill="none" stroke="#1aa3e8" stroke-width="1.15" stroke-linejoin="round"/><circle cx="5.3" cy="5.6" r="0.85" fill="#1aa3e8"/><circle cx="8.2" cy="5.6" r="0.85" fill="#1aa3e8"/><circle cx="11.1" cy="5.6" r="0.85" fill="#1aa3e8"/></svg>
<div style="position:absolute;left:297px;top:1.5px;line-height:16px;font-size:11px;color:#111;font-weight:normal;white-space:nowrap;letter-spacing:-0.171px;">WhatsApp message</div>
<div style="position:absolute;left:421px;top:1.5px;line-height:16px;font-size:11px;color:#505050;font-weight:normal;white-space:nowrap;letter-spacing:0.007px;">20/05/2019 08:38:05 am (UTC+0)</div>
<div style="position:absolute;left:613px;top:1.5px;line-height:16px;font-size:11px;color:#111;font-weight:normal;white-space:nowrap;"></div>
<div style="position:absolute;left:1133px;top:1.5px;line-height:16px;font-size:11px;color:#111;font-weight:normal;white-space:nowrap;letter-spacing:-0.149px;">Magica Gipnoz &lt;7901</div>
<div style="position:absolute;left:1239px;top:4px;width:18px;height:14px;background:#e4e4e4;filter:blur(2px)"></div>
<div style="position:absolute;left:1254px;top:1.5px;line-height:16px;font-size:11px;color:#111;font-weight:normal;white-space:nowrap;letter-spacing:0.319px;">0048&gt;</div>
<div style="position:absolute;left:1308px;top:6px;width:1px;height:10px;background:#777"></div>
</div>
<div style="position:absolute;left:0;top:14px;width:1309px;height:21px;background:#eef1f2">
<svg style="position:absolute;left:5px;top:4px" width="13" height="13" viewBox="0 0 13 13"><rect x="0.5" y="0.5" width="12" height="12" fill="#fff" stroke="#333" stroke-width="1"/><path d="M2.5 6.5 L5 9.5 L10.5 3" fill="none" stroke="#333" stroke-width="1.3"/></svg>
<svg style="position:absolute;left:28.80000000000001px;top:1.9px" width="16" height="16" viewBox="0 0 16 16"><polygon points="8.00,0.40 10.23,4.93 15.23,5.65 11.61,9.17 12.47,14.15 8.00,11.80 3.53,14.15 4.39,9.17 0.77,5.65 5.77,4.93" fill="none" stroke="#bdbdbd" stroke-width="1.15" stroke-linejoin="miter"/></svg>
<svg style="position:absolute;left:101px;top:2px" width="18" height="18" viewBox="0 0 18 18"><path d="M3.7 4.4 H7.5 Q8.8 4.4 8.8 5.7 V13.2 Q8.8 14.5 7.5 14.5 H2.9 Q1.6 14.5 1.6 13.2 V6.5 Z M1.6 6.5 H3.7 V4.4" fill="none" stroke="#1aa3e8" stroke-width="1.2" stroke-linejoin="round"/><path d="M4.3 4.2 V3.5 Q4.3 2.5 5.3 2.5 H9.8 Q11.1 2.5 11.1 3.8 V11.8" fill="none" stroke="#1aa3e8" stroke-width="1.2"/><path d="M6.6 2.2 V1.8 Q6.6 0.7 7.7 0.7 H12 Q13.3 0.7 13.3 2 V9.5" fill="none" stroke="#1aa3e8" stroke-width="1.2"/><text x="12.6" y="18.3" font-family="Liberation Sans" font-size="8.2" font-weight="bold" fill="#a3172a">2</text></svg>
<svg style="position:absolute;left:184px;top:2px" width="16" height="16" viewBox="0 0 16 16"><defs><linearGradient id="wg" x1="0" y1="0" x2="0" y2="1"><stop offset="0" stop-color="#5fe36e"/><stop offset="1" stop-color="#1fae2a"/></linearGradient></defs><rect x="0" y="0" width="16" height="16" rx="3" fill="url(#wg)"/><path d="M8 3 A5 5 0 1 1 5.2 12.2 L3 12.9 L3.8 10.8 A5 5 0 0 1 8 3 Z" fill="none" stroke="#fff" stroke-width="1.1"/><path d="M6.2 6 C6.2 8 8 9.8 10 9.8 L10.3 9 L9.3 8.5 L8.8 9 C8 8.6 7.4 8 7 7.2 L7.5 6.7 L7 5.7 Z" fill="#fff"/></svg>
<svg style="position:absolute;left:232px;top:4px" width="12" height="12" viewBox="0 0 12 12"><circle cx="6" cy="6" r="6" fill="#f7842e"/><path d="M8.8 3.2 L3.8 8.2 M3.4 4.6 V8.6 H7.4" fill="none" stroke="#fff" stroke-width="1.6"/></svg>
<svg style="position:absolute;left:275px;top:2px" width="17" height="15" viewBox="0 0 17 15"><path d="M6.6 10.6 C3.5 10.2 0.8 8.3 0.8 5.7 C0.8 2.8 4.1 0.6 8.2 0.6 C12.3 0.6 15.6 2.8 15.6 5.7 C15.6 8.6 12.3 10.8 8.2 10.8 L5.2 13.6 Z" fill="none" stroke="#1aa3e8" stroke-width="1.15" stroke-linejoin="round"/><circle cx="5.3" cy="5.6" r="0.85" fill="#1aa3e8"/><circle cx="8.2" cy="5.6" r="0.85" fill="#1aa3e8"/><circle cx="11.1" cy="5.6" r="0.85" fill="#1aa3e8"/></svg>
<div style="position:absolute;left:297px;top:1.5px;line-height:16px;font-size:11px;color:#111;font-weight:normal;white-space:nowrap;letter-spacing:-0.171px;">WhatsApp message</div>
<div style="position:absolute;left:421px;top:1.5px;line-height:16px;font-size:11px;color:#505050;font-weight:normal;white-space:nowrap;letter-spacing:0.007px;">20/05/2019 07:15:55 am (UTC+0)</div>
<div style="position:absolute;left:613px;top:1.5px;line-height:16px;font-size:11px;color:#111;font-weight:normal;white-space:nowrap;"></div>
<div style="position:absolute;left:1133px;top:1.5px;line-height:16px;font-size:11px;color:#111;font-weight:normal;white-space:nowrap;letter-spacing:-0.149px;">Magica Gipnoz &lt;7901</div>
<div style="position:absolute;left:1239px;top:4px;width:18px;height:14px;background:#e4e4e4;filter:blur(2px)"></div>
<div style="position:absolute;left:1254px;top:1.5px;line-height:16px;font-size:11px;color:#111;font-weight:normal;white-space:nowrap;letter-spacing:0.319px;">0048&gt;</div>
<div style="position:absolute;left:1308px;top:6px;width:1px;height:10px;background:#777"></div>
</div>
<div style="position:absolute;left:0;top:35px;width:1309px;height:21px;background:#fff">
<svg style="position:absolute;left:5px;top:4px" width="13" height="13" viewBox="0 0 13 13"><rect x="0.5" y="0.5" width="12" height="12" fill="#fff" stroke="#333" stroke-width="1"/><path d="M2.5 6.5 L5 9.5 L10.5 3" fill="none" stroke="#333" stroke-width="1.3"/></svg>
<svg style="position:absolute;left:28.80000000000001px;top:1.9px" width="16" height="16" viewBox="0 0 16 16"><polygon points="8.00,0.40 10.23,4.93 15.23,5.65 11.61,9.17 12.47,14.15 8.00,11.80 3.53,14.15 4.39,9.17 0.77,5.65 5.77,4.93" fill="none" stroke="#bdbdbd" stroke-width="1.15" stroke-linejoin="miter"/></svg>
<svg style="position:absolute;left:101px;top:2px" width="18" height="18" viewBox="0 0 18 18"><path d="M3.7 4.4 H7.5 Q8.8 4.4 8.8 5.7 V13.2 Q8.8 14.5 7.5 14.5 H2.9 Q1.6 14.5 1.6 13.2 V6.5 Z M1.6 6.5 H3.7 V4.4" fill="none" stroke="#1aa3e8" stroke-width="1.2" stroke-linejoin="round"/><path d="M4.3 4.2 V3.5 Q4.3 2.5 5.3 2.5 H9.8 Q11.1 2.5 11.1 3.8 V11.8" fill="none" stroke="#1aa3e8" stroke-width="1.2"/><path d="M6.6 2.2 V1.8 Q6.6 0.7 7.7 0.7 H12 Q13.3 0.7 13.3 2 V9.5" fill="none" stroke="#1aa3e8" stroke-width="1.2"/><text x="12.6" y="18.3" font-family="Liberation Sans" font-size="8.2" font-weight="bold" fill="#a3172a">2</text></svg>
<svg style="position:absolute;left:184px;top:2px" width="16" height="16" viewBox="0 0 16 16"><defs><linearGradient id="wg" x1="0" y1="0" x2="0" y2="1"><stop offset="0" stop-color="#5fe36e"/><stop offset="1" stop-color="#1fae2a"/></linearGradient></defs><rect x="0" y="0" width="16" height="16" rx="3" fill="url(#wg)"/><path d="M8 3 A5 5 0 1 1 5.2 12.2 L3 12.9 L3.8 10.8 A5 5 0 0 1 8 3 Z" fill="none" stroke="#fff" stroke-width="1.1"/><path d="M6.2 6 C6.2 8 8 9.8 10 9.8 L10.3 9 L9.3 8.5 L8.8 9 C8 8.6 7.4 8 7 7.2 L7.5 6.7 L7 5.7 Z" fill="#fff"/></svg>
<svg style="position:absolute;left:232px;top:4px" width="12" height="12" viewBox="0 0 12 12"><circle cx="6" cy="6" r="6" fill="#f7842e"/><path d="M8.8 3.2 L3.8 8.2 M3.4 4.6 V8.6 H7.4" fill="none" stroke="#fff" stroke-width="1.6"/></svg>
<svg style="position:absolute;left:275px;top:2px" width="17" height="15" viewBox="0 0 17 15"><path d="M6.6 10.6 C3.5 10.2 0.8 8.3 0.8 5.7 C0.8 2.8 4.1 0.6 8.2 0.6 C12.3 0.6 15.6 2.8 15.6 5.7 C15.6 8.6 12.3 10.8 8.2 10.8 L5.2 13.6 Z" fill="none" stroke="#1aa3e8" stroke-width="1.15" stroke-linejoin="round"/><circle cx="5.3" cy="5.6" r="0.85" fill="#1aa3e8"/><circle cx="8.2" cy="5.6" r="0.85" fill="#1aa3e8"/><circle cx="11.1" cy="5.6" r="0.85" fill="#1aa3e8"/></svg>
<div style="position:absolute;left:297px;top:1.5px;line-height:16px;font-size:11px;color:#111;font-weight:normal;white-space:nowrap;letter-spacing:-0.171px;">WhatsApp message</div>
<div style="position:absolute;left:421px;top:1.5px;line-height:16px;font-size:11px;color:#505050;font-weight:normal;white-space:nowrap;letter-spacing:0.007px;">17/05/2019 01:26:02 pm (UTC+0)</div>
<div style="position:absolute;left:613px;top:1.5px;line-height:16px;font-size:11px;color:#111;font-weight:normal;white-space:nowrap;"></div>
<div style="position:absolute;left:1133px;top:1.5px;line-height:16px;font-size:11px;color:#111;font-weight:normal;white-space:nowrap;letter-spacing:-0.149px;">Magica Gipnoz &lt;7901</div>
<div style="position:absolute;left:1239px;top:4px;width:18px;height:14px;background:#e4e4e4;filter:blur(2px)"></div>
<div style="position:absolute;left:1254px;top:1.5px;line-height:16px;font-size:11px;color:#111;font-weight:normal;white-space:nowrap;letter-spacing:0.319px;">0048&gt;</div>
<div style="position:absolute;left:1308px;top:6px;width:1px;height:10px;background:#777"></div>
</div>
<div style="position:absolute;left:0;top:56px;width:1309px;height:21px;background:#eef1f2">
<svg style="position:absolute;left:5px;top:4px" width="13" height="13" viewBox="0 0 13 13"><rect x="0.5" y="0.5" width="12" height="12" fill="#fff" stroke="#333" stroke-width="1"/><path d="M2.5 6.5 L5 9.5 L10.5 3" fill="none" stroke="#333" stroke-width="1.3"/></svg>
<svg style="position:absolute;left:28.80000000000001px;top:1.9px" width="16" height="16" viewBox="0 0 16 16"><polygon points="8.00,0.40 10.23,4.93 15.23,5.65 11.61,9.17 12.47,14.15 8.00,11.80 3.53,14.15 4.39,9.17 0.77,5.65 5.77,4.93" fill="none" stroke="#bdbdbd" stroke-width="1.15" stroke-linejoin="miter"/></svg>
<svg style="position:absolute;left:101px;top:2px" width="18" height="18" viewBox="0 0 18 18"><path d="M3.7 4.4 H7.5 Q8.8 4.4 8.8 5.7 V13.2 Q8.8 14.5 7.5 14.5 H2.9 Q1.6 14.5 1.6 13.2 V6.5 Z M1.6 6.5 H3.7 V4.4" fill="none" stroke="#1aa3e8" stroke-width="1.2" stroke-linejoin="round"/><path d="M4.3 4.2 V3.5 Q4.3 2.5 5.3 2.5 H9.8 Q11.1 2.5 11.1 3.8 V11.8" fill="none" stroke="#1aa3e8" stroke-width="1.2"/><path d="M6.6 2.2 V1.8 Q6.6 0.7 7.7 0.7 H12 Q13.3 0.7 13.3 2 V9.5" fill="none" stroke="#1aa3e8" stroke-width="1.2"/><text x="12.6" y="18.3" font-family="Liberation Sans" font-size="8.2" font-weight="bold" fill="#a3172a">2</text></svg>
<svg style="position:absolute;left:184px;top:2px" width="16" height="16" viewBox="0 0 16 16"><defs><linearGradient id="wg" x1="0" y1="0" x2="0" y2="1"><stop offset="0" stop-color="#5fe36e"/><stop offset="1" stop-color="#1fae2a"/></linearGradient></defs><rect x="0" y="0" width="16" height="16" rx="3" fill="url(#wg)"/><path d="M8 3 A5 5 0 1 1 5.2 12.2 L3 12.9 L3.8 10.8 A5 5 0 0 1 8 3 Z" fill="none" stroke="#fff" stroke-width="1.1"/><path d="M6.2 6 C6.2 8 8 9.8 10 9.8 L10.3 9 L9.3 8.5 L8.8 9 C8 8.6 7.4 8 7 7.2 L7.5 6.7 L7 5.7 Z" fill="#fff"/></svg>
<svg style="position:absolute;left:232px;top:4px" width="12" height="12" viewBox="0 0 12 12"><circle cx="6" cy="6" r="6" fill="#f7842e"/><path d="M8.8 3.2 L3.8 8.2 M3.4 4.6 V8.6 H7.4" fill="none" stroke="#fff" stroke-width="1.6"/></svg>
<svg style="position:absolute;left:275px;top:2px" width="17" height="15" viewBox="0 0 17 15"><path d="M6.6 10.6 C3.5 10.2 0.8 8.3 0.8 5.7 C0.8 2.8 4.1 0.6 8.2 0.6 C12.3 0.6 15.6 2.8 15.6 5.7 C15.6 8.6 12.3 10.8 8.2 10.8 L5.2 13.6 Z" fill="none" stroke="#1aa3e8" stroke-width="1.15" stroke-linejoin="round"/><circle cx="5.3" cy="5.6" r="0.85" fill="#1aa3e8"/><circle cx="8.2" cy="5.6" r="0.85" fill="#1aa3e8"/><circle cx="11.1" cy="5.6" r="0.85" fill="#1aa3e8"/></svg>
<div style="position:absolute;left:297px;top:1.5px;line-height:16px;font-size:11px;color:#111;font-weight:normal;white-space:nowrap;letter-spacing:-0.171px;">WhatsApp message</div>
<div style="position:absolute;left:421px;top:1.5px;line-height:16px;font-size:11px;color:#505050;font-weight:normal;white-space:nowrap;letter-spacing:0.007px;">20/05/2019 07:30:02 am (UTC+0)</div>
<div style="position:absolute;left:613px;top:1.5px;line-height:16px;font-size:11px;color:#111;font-weight:normal;white-space:nowrap;"></div>
<div style="position:absolute;left:1133px;top:1.5px;line-height:16px;font-size:11px;color:#111;font-weight:normal;white-space:nowrap;letter-spacing:-0.149px;">Magica Gipnoz &lt;7901</div>
<div style="position:absolute;left:1239px;top:4px;width:18px;height:14px;background:#e4e4e4;filter:blur(2px)"></div>
<div style="position:absolute;left:1254px;top:1.5px;line-height:16px;font-size:11px;color:#111;font-weight:normal;white-space:nowrap;letter-spacing:0.319px;">0048&gt;</div>
<div style="position:absolute;left:1308px;top:6px;width:1px;height:10px;background:#777"></div>
</div>
<div style="position:absolute;left:0;top:77px;width:1309px;height:21px;background:#fff">
<svg style="position:absolute;left:5px;top:4px" width="13" height="13" viewBox="0 0 13 13"><rect x="0.5" y="0.5" width="12" height="12" fill="#fff" stroke="#333" stroke-width="1"/><path d="M2.5 6.5 L5 9.5 L10.5 3" fill="none" stroke="#333" stroke-width="1.3"/></svg>
<svg style="position:absolute;left:28.80000000000001px;top:1.9px" width="16" height="16" viewBox="0 0 16 16"><polygon points="8.00,0.40 10.23,4.93 15.23,5.65 11.61,9.17 12.47,14.15 8.00,11.80 3.53,14.15 4.39,9.17 0.77,5.65 5.77,4.93" fill="none" stroke="#bdbdbd" stroke-width="1.15" stroke-linejoin="miter"/></svg>
<svg style="position:absolute;left:184px;top:2px" width="16" height="16" viewBox="0 0 16 16"><rect x="0" y="0" width="16" height="16" rx="3" fill="#2f86ea"/><path d="M8 3 C10.9 3 13 5 13 7.8 C13 10.6 10.9 12.6 8 12.6 C7.2 12.6 6.5 12.45 5.9 12.2 L3.4 13 L4.1 10.8 C3.4 10 3 9 3 7.8 C3 5 5.1 3 8 3 Z" fill="#f0f0f0"/></svg>
<svg style="position:absolute;left:232px;top:4px" width="12" height="12" viewBox="0 0 12 12"><circle cx="6" cy="6" r="6" fill="#f7842e"/><path d="M8.8 3.2 L3.8 8.2 M3.4 4.6 V8.6 H7.4" fill="none" stroke="#fff" stroke-width="1.6"/></svg>
<svg style="position:absolute;left:275px;top:2px" width="17" height="15" viewBox="0 0 17 15"><path d="M6.6 10.6 C3.5 10.2 0.8 8.3 0.8 5.7 C0.8 2.8 4.1 0.6 8.2 0.6 C12.3 0.6 15.6 2.8 15.6 5.7 C15.6 8.6 12.3 10.8 8.2 10.8 L5.2 13.6 Z" fill="none" stroke="#1aa3e8" stroke-width="1.15" stroke-linejoin="round"/><circle cx="5.3" cy="5.6" r="0.85" fill="#1aa3e8"/><circle cx="8.2" cy="5.6" r="0.85" fill="#1aa3e8"/><circle cx="11.1" cy="5.6" r="0.85" fill="#1aa3e8"/></svg>
<div style="position:absolute;left:297px;top:1.5px;line-height:16px;font-size:11px;color:#111;font-weight:normal;white-space:nowrap;letter-spacing:-0.363px;">Signal message</div>
<div style="position:absolute;left:421px;top:1.5px;line-height:16px;font-size:11px;color:#505050;font-weight:normal;white-space:nowrap;letter-spacing:0.007px;">12/06/2020 12:22:44 pm (UTC+0)</div>
<div style="position:absolute;left:613px;top:1.5px;line-height:16px;font-size:11px;color:#111;font-weight:normal;white-space:nowrap;">Привет</div>
<div style="position:absolute;left:1133px;top:1.5px;line-height:16px;font-size:11px;color:#111;font-weight:normal;white-space:nowrap;letter-spacing:-0.107px;">Magica Gipnoz &lt;79E30311-7D1...</div>
</div>
<div style="position:absolute;left:0;top:98px;width:1309px;height:21px;background:#eef1f2">
<svg style="position:absolute;left:5px;top:4px" width="13" height="13" viewBox="0 0 13 13"><rect x="0.5" y="0.5" width="12" height="12" fill="#fff" stroke="#333" stroke-width="1"/><path d="M2.5 6.5 L5 9.5 L10.5 3" fill="none" stroke="#333" stroke-width="1.3"/></svg>
<svg style="position:absolute;left:28.80000000000001px;top:1.9px" width="16" height="16" viewBox="0 0 16 16"><polygon points="8.00,0.40 10.23,4.93 15.23,5.65 11.61,9.17 12.47,14.15 8.00,11.80 3.53,14.15 4.39,9.17 0.77,5.65 5.77,4.93" fill="none" stroke="#bdbdbd" stroke-width="1.15" stroke-linejoin="miter"/></svg>
<svg style="position:absolute;left:184px;top:2px" width="16" height="16" viewBox="0 0 16 16"><rect x="0" y="0" width="16" height="16" rx="3" fill="#2f86ea"/><path d="M8 3 C10.9 3 13 5 13 7.8 C13 10.6 10.9 12.6 8 12.6 C7.2 12.6 6.5 12.45 5.9 12.2 L3.4 13 L4.1 10.8 C3.4 10 3 9 3 7.8 C3 5 5.1 3 8 3 Z" fill="#f0f0f0"/></svg>
<svg style="position:absolute;left:232px;top:4px" width="12" height="12" viewBox="0 0 12 12"><circle cx="6" cy="6" r="6" fill="#f7842e"/><path d="M8.8 3.2 L3.8 8.2 M3.4 4.6 V8.6 H7.4" fill="none" stroke="#fff" stroke-width="1.6"/></svg>
<svg style="position:absolute;left:275px;top:2px" width="17" height="15" viewBox="0 0 17 15"><path d="M6.6 10.6 C3.5 10.2 0.8 8.3 0.8 5.7 C0.8 2.8 4.1 0.6 8.2 0.6 C12.3 0.6 15.6 2.8 15.6 5.7 C15.6 8.6 12.3 10.8 8.2 10.8 L5.2 13.6 Z" fill="none" stroke="#1aa3e8" stroke-width="1.15" stroke-linejoin="round"/><circle cx="5.3" cy="5.6" r="0.85" fill="#1aa3e8"/><circle cx="8.2" cy="5.6" r="0.85" fill="#1aa3e8"/><circle cx="11.1" cy="5.6" r="0.85" fill="#1aa3e8"/></svg>
<div style="position:absolute;left:297px;top:1.5px;line-height:16px;font-size:11px;color:#111;font-weight:normal;white-space:nowrap;letter-spacing:-0.363px;">Signal message</div>
<div style="position:absolute;left:421px;top:1.5px;line-height:16px;font-size:11px;color:#505050;font-weight:normal;white-space:nowrap;letter-spacing:0.007px;">12/06/2020 12:22:55 pm (UTC+0)</div>
<div style="position:absolute;left:613px;top:1.5px;line-height:16px;font-size:11px;color:#111;font-weight:normal;white-space:nowrap;">Я смотрю, ты и здесь теперь</div>
<div style="position:absolute;left:1133px;top:1.5px;line-height:16px;font-size:11px;color:#111;font-weight:normal;white-space:nowrap;letter-spacing:-0.107px;">Magica Gipnoz &lt;79E30311-7D1...</div>
</div>
<div style="position:absolute;left:0;top:119px;width:1309px;height:21px;background:#fff">
<svg style="position:absolute;left:5px;top:4px" width="13" height="13" viewBox="0 0 13 13"><rect x="0.5" y="0.5" width="12" height="12" fill="#fff" stroke="#333" stroke-width="1"/><path d="M2.5 6.5 L5 9.5 L10.5 3" fill="none" stroke="#333" stroke-width="1.3"/></svg>
<svg style="position:absolute;left:28.80000000000001px;top:1.9px" width="16" height="16" viewBox="0 0 16 16"><polygon points="8.00,0.40 10.23,4.93 15.23,5.65 11.61,9.17 12.47,14.15 8.00,11.80 3.53,14.15 4.39,9.17 0.77,5.65 5.77,4.93" fill="none" stroke="#bdbdbd" stroke-width="1.15" stroke-linejoin="miter"/></svg>
<svg style="position:absolute;left:184px;top:2px" width="16" height="16" viewBox="0 0 16 16"><rect x="0" y="0" width="16" height="16" rx="3" fill="#2f86ea"/><path d="M8 3 C10.9 3 13 5 13 7.8 C13 10.6 10.9 12.6 8 12.6 C7.2 12.6 6.5 12.45 5.9 12.2 L3.4 13 L4.1 10.8 C3.4 10 3 9 3 7.8 C3 5 5.1 3 8 3 Z" fill="#f0f0f0"/></svg>
<svg style="position:absolute;left:232px;top:4px" width="12" height="12" viewBox="0 0 12 12"><circle cx="6" cy="6" r="6" fill="#f7842e"/><path d="M8.8 3.2 L3.8 8.2 M3.4 4.6 V8.6 H7.4" fill="none" stroke="#fff" stroke-width="1.6"/></svg>
<svg style="position:absolute;left:275px;top:2px" width="17" height="15" viewBox="0 0 17 15"><path d="M6.6 10.6 C3.5 10.2 0.8 8.3 0.8 5.7 C0.8 2.8 4.1 0.6 8.2 0.6 C12.3 0.6 15.6 2.8 15.6 5.7 C15.6 8.6 12.3 10.8 8.2 10.8 L5.2 13.6 Z" fill="none" stroke="#1aa3e8" stroke-width="1.15" stroke-linejoin="round"/><circle cx="5.3" cy="5.6" r="0.85" fill="#1aa3e8"/><circle cx="8.2" cy="5.6" r="0.85" fill="#1aa3e8"/><circle cx="11.1" cy="5.6" r="0.85" fill="#1aa3e8"/></svg>
<div style="position:absolute;left:297px;top:1.5px;line-height:16px;font-size:11px;color:#111;font-weight:normal;white-space:nowrap;letter-spacing:-0.363px;">Signal message</div>
<div style="position:absolute;left:421px;top:1.5px;line-height:16px;font-size:11px;color:#505050;font-weight:normal;white-space:nowrap;letter-spacing:0.007px;">12/06/2020 12:24:19 pm (UTC+0)</div>
<div style="position:absolute;left:613px;top:1.5px;line-height:16px;font-size:11px;color:#111;font-weight:normal;white-space:nowrap;">Ну да, что есть, то есть</div>
<div style="position:absolute;left:1133px;top:1.5px;line-height:16px;font-size:11px;color:#111;font-weight:normal;white-space:nowrap;letter-spacing:-0.107px;">Magica Gipnoz &lt;79E30311-7D1...</div>
</div>
<div style="position:absolute;left:0;top:140px;width:1309px;height:21px;background:#eef1f2">
<svg style="position:absolute;left:5px;top:4px" width="13" height="13" viewBox="0 0 13 13"><rect x="0.5" y="0.5" width="12" height="12" fill="#fff" stroke="#333" stroke-width="1"/><path d="M2.5 6.5 L5 9.5 L10.5 3" fill="none" stroke="#333" stroke-width="1.3"/></svg>
<svg style="position:absolute;left:28.80000000000001px;top:1.9px" width="16" height="16" viewBox="0 0 16 16"><polygon points="8.00,0.40 10.23,4.93 15.23,5.65 11.61,9.17 12.47,14.15 8.00,11.80 3.53,14.15 4.39,9.17 0.77,5.65 5.77,4.93" fill="none" stroke="#bdbdbd" stroke-width="1.15" stroke-linejoin="miter"/></svg>
<svg style="position:absolute;left:184px;top:2px" width="16" height="16" viewBox="0 0 16 16"><rect x="0" y="0" width="16" height="16" rx="3" fill="#2f86ea"/><path d="M8 3 C10.9 3 13 5 13 7.8 C13 10.6 10.9 12.6 8 12.6 C7.2 12.6 6.5 12.45 5.9 12.2 L3.4 13 L4.1 10.8 C3.4 10 3 9 3 7.8 C3 5 5.1 3 8 3 Z" fill="#f0f0f0"/></svg>
<svg style="position:absolute;left:232px;top:4px" width="12" height="12" viewBox="0 0 12 12"><circle cx="6" cy="6" r="6" fill="#f7842e"/><path d="M8.8 3.2 L3.8 8.2 M3.4 4.6 V8.6 H7.4" fill="none" stroke="#fff" stroke-width="1.6"/></svg>
<svg style="position:absolute;left:275px;top:2px" width="17" height="15" viewBox="0 0 17 15"><path d="M6.6 10.6 C3.5 10.2 0.8 8.3 0.8 5.7 C0.8 2.8 4.1 0.6 8.2 0.6 C12.3 0.6 15.6 2.8 15.6 5.7 C15.6 8.6 12.3 10.8 8.2 10.8 L5.2 13.6 Z" fill="none" stroke="#1aa3e8" stroke-width="1.15" stroke-linejoin="round"/><circle cx="5.3" cy="5.6" r="0.85" fill="#1aa3e8"/><circle cx="8.2" cy="5.6" r="0.85" fill="#1aa3e8"/><circle cx="11.1" cy="5.6" r="0.85" fill="#1aa3e8"/></svg>
<div style="position:absolute;left:297px;top:1.5px;line-height:16px;font-size:11px;color:#111;font-weight:normal;white-space:nowrap;letter-spacing:-0.363px;">Signal message</div>
<div style="position:absolute;left:421px;top:1.5px;line-height:16px;font-size:11px;color:#505050;font-weight:normal;white-space:nowrap;letter-spacing:0.007px;">12/06/2020 12:25:30 pm (UTC+0)</div>
<div style="position:absolute;left:613px;top:1.5px;line-height:16px;font-size:11px;color:#111;font-weight:normal;white-space:nowrap;">Да, а ты?</div>
<div style="position:absolute;left:1133px;top:1.5px;line-height:16px;font-size:11px;color:#111;font-weight:normal;white-space:nowrap;letter-spacing:-0.107px;">Magica Gipnoz &lt;79E30311-7D1...</div>
</div>
<div style="position:absolute;left:0;top:161px;width:1309px;height:21px;background:#fff">
<svg style="position:absolute;left:5px;top:4px" width="13" height="13" viewBox="0 0 13 13"><rect x="0.5" y="0.5" width="12" height="12" fill="#fff" stroke="#333" stroke-width="1"/><path d="M2.5 6.5 L5 9.5 L10.5 3" fill="none" stroke="#333" stroke-width="1.3"/></svg>
<svg style="position:absolute;left:28.80000000000001px;top:1.9px" width="16" height="16" viewBox="0 0 16 16"><polygon points="8.00,0.40 10.23,4.93 15.23,5.65 11.61,9.17 12.47,14.15 8.00,11.80 3.53,14.15 4.39,9.17 0.77,5.65 5.77,4.93" fill="none" stroke="#bdbdbd" stroke-width="1.15" stroke-linejoin="miter"/></svg>
<svg style="position:absolute;left:184px;top:2px" width="16" height="16" viewBox="0 0 16 16"><rect x="0" y="0" width="16" height="16" rx="3" fill="#2f86ea"/><path d="M8 3 C10.9 3 13 5 13 7.8 C13 10.6 10.9 12.6 8 12.6 C7.2 12.6 6.5 12.45 5.9 12.2 L3.4 13 L4.1 10.8 C3.4 10 3 9 3 7.8 C3 5 5.1 3 8 3 Z" fill="#f0f0f0"/></svg>
<svg style="position:absolute;left:232px;top:4px" width="12" height="12" viewBox="0 0 12 12"><circle cx="6" cy="6" r="6" fill="#f7842e"/><path d="M8.8 3.2 L3.8 8.2 M3.4 4.6 V8.6 H7.4" fill="none" stroke="#fff" stroke-width="1.6"/></svg>
<svg style="position:absolute;left:275px;top:2px" width="17" height="15" viewBox="0 0 17 15"><path d="M6.6 10.6 C3.5 10.2 0.8 8.3 0.8 5.7 C0.8 2.8 4.1 0.6 8.2 0.6 C12.3 0.6 15.6 2.8 15.6 5.7 C15.6 8.6 12.3 10.8 8.2 10.8 L5.2 13.6 Z" fill="none" stroke="#1aa3e8" stroke-width="1.15" stroke-linejoin="round"/><circle cx="5.3" cy="5.6" r="0.85" fill="#1aa3e8"/><circle cx="8.2" cy="5.6" r="0.85" fill="#1aa3e8"/><circle cx="11.1" cy="5.6" r="0.85" fill="#1aa3e8"/></svg>
<div style="position:absolute;left:297px;top:1.5px;line-height:16px;font-size:11px;color:#111;font-weight:normal;white-space:nowrap;letter-spacing:-0.363px;">Signal message</div>
<div style="position:absolute;left:421px;top:1.5px;line-height:16px;font-size:11px;color:#505050;font-weight:normal;white-space:nowrap;letter-spacing:0.007px;">12/06/2020 12:25:58 pm (UTC+0)</div>
<div style="position:absolute;left:613px;top:1.5px;line-height:16px;font-size:11px;color:#111;font-weight:normal;white-space:nowrap;">Ну так заработай, не?</div>
<div style="position:absolute;left:1133px;top:1.5px;line-height:16px;font-size:11px;color:#111;font-weight:normal;white-space:nowrap;letter-spacing:-0.107px;">Magica Gipnoz &lt;79E30311-7D1...</div>
</div>
<div style="position:absolute;left:0;top:182px;width:1309px;height:21px;background:#eef1f2">
<svg style="position:absolute;left:5px;top:4px" width="13" height="13" viewBox="0 0 13 13"><rect x="0.5" y="0.5" width="12" height="12" fill="#fff" stroke="#333" stroke-width="1"/><path d="M2.5 6.5 L5 9.5 L10.5 3" fill="none" stroke="#333" stroke-width="1.3"/></svg>
<svg style="position:absolute;left:28.80000000000001px;top:1.9px" width="16" height="16" viewBox="0 0 16 16"><polygon points="8.00,0.40 10.23,4.93 15.23,5.65 11.61,9.17 12.47,14.15 8.00,11.80 3.53,14.15 4.39,9.17 0.77,5.65 5.77,4.93" fill="none" stroke="#bdbdbd" stroke-width="1.15" stroke-linejoin="miter"/></svg>
<svg style="position:absolute;left:184px;top:2px" width="16" height="16" viewBox="0 0 16 16"><rect x="0" y="0" width="16" height="16" rx="3" fill="#2f86ea"/><path d="M8 3 C10.9 3 13 5 13 7.8 C13 10.6 10.9 12.6 8 12.6 C7.2 12.6 6.5 12.45 5.9 12.2 L3.4 13 L4.1 10.8 C3.4 10 3 9 3 7.8 C3 5 5.1 3 8 3 Z" fill="#f0f0f0"/></svg>
<svg style="position:absolute;left:232px;top:4px" width="12" height="12" viewBox="0 0 12 12"><circle cx="6" cy="6" r="6" fill="#f7842e"/><path d="M8.8 3.2 L3.8 8.2 M3.4 4.6 V8.6 H7.4" fill="none" stroke="#fff" stroke-width="1.6"/></svg>
<svg style="position:absolute;left:275px;top:2px" width="17" height="15" viewBox="0 0 17 15"><path d="M6.6 10.6 C3.5 10.2 0.8 8.3 0.8 5.7 C0.8 2.8 4.1 0.6 8.2 0.6 C12.3 0.6 15.6 2.8 15.6 5.7 C15.6 8.6 12.3 10.8 8.2 10.8 L5.2 13.6 Z" fill="none" stroke="#1aa3e8" stroke-width="1.15" stroke-linejoin="round"/><circle cx="5.3" cy="5.6" r="0.85" fill="#1aa3e8"/><circle cx="8.2" cy="5.6" r="0.85" fill="#1aa3e8"/><circle cx="11.1" cy="5.6" r="0.85" fill="#1aa3e8"/></svg>
<div style="position:absolute;left:297px;top:1.5px;line-height:16px;font-size:11px;color:#111;font-weight:normal;white-space:nowrap;letter-spacing:-0.363px;">Signal message</div>
<div style="position:absolute;left:421px;top:1.5px;line-height:16px;font-size:11px;color:#505050;font-weight:normal;white-space:nowrap;letter-spacing:0.007px;">12/06/2020 12:26:58 pm (UTC+0)</div>
<div style="position:absolute;left:613px;top:1.5px;line-height:16px;font-size:11px;color:#111;font-weight:normal;white-space:nowrap;">Опять ты за это взялся?</div>
<div style="position:absolute;left:1133px;top:1.5px;line-height:16px;font-size:11px;color:#111;font-weight:normal;white-space:nowrap;letter-spacing:-0.107px;">Magica Gipnoz &lt;79E30311-7D1...</div>
</div>
<div style="position:absolute;left:0;top:203px;width:1309px;height:21px;background:#fff">
<svg style="position:absolute;left:5px;top:4px" width="13" height="13" viewBox="0 0 13 13"><rect x="0.5" y="0.5" width="12" height="12" fill="#fff" stroke="#333" stroke-width="1"/><path d="M2.5 6.5 L5 9.5 L10.5 3" fill="none" stroke="#333" stroke-width="1.3"/></svg>
<svg style="position:absolute;left:28.80000000000001px;top:1.9px" width="16" height="16" viewBox="0 0 16 16"><polygon points="8.00,0.40 10.23,4.93 15.23,5.65 11.61,9.17 12.47,14.15 8.00,11.80 3.53,14.15 4.39,9.17 0.77,5.65 5.77,4.93" fill="none" stroke="#bdbdbd" stroke-width="1.15" stroke-linejoin="miter"/></svg>
<svg style="position:absolute;left:184px;top:2px" width="16" height="16" viewBox="0 0 16 16"><rect x="0" y="0" width="16" height="16" rx="3" fill="#2f86ea"/><path d="M8 3 C10.9 3 13 5 13 7.8 C13 10.6 10.9 12.6 8 12.6 C7.2 12.6 6.5 12.45 5.9 12.2 L3.4 13 L4.1 10.8 C3.4 10 3 9 3 7.8 C3 5 5.1 3 8 3 Z" fill="#f0f0f0"/></svg>
<svg style="position:absolute;left:232px;top:4px" width="12" height="12" viewBox="0 0 12 12"><circle cx="6" cy="6" r="6" fill="#f7842e"/><path d="M8.8 3.2 L3.8 8.2 M3.4 4.6 V8.6 H7.4" fill="none" stroke="#fff" stroke-width="1.6"/></svg>
<svg style="position:absolute;left:275px;top:2px" width="17" height="15" viewBox="0 0 17 15"><path d="M6.6 10.6 C3.5 10.2 0.8 8.3 0.8 5.7 C0.8 2.8 4.1 0.6 8.2 0.6 C12.3 0.6 15.6 2.8 15.6 5.7 C15.6 8.6 12.3 10.8 8.2 10.8 L5.2 13.6 Z" fill="none" stroke="#1aa3e8" stroke-width="1.15" stroke-linejoin="round"/><circle cx="5.3" cy="5.6" r="0.85" fill="#1aa3e8"/><circle cx="8.2" cy="5.6" r="0.85" fill="#1aa3e8"/><circle cx="11.1" cy="5.6" r="0.85" fill="#1aa3e8"/></svg>
<div style="position:absolute;left:297px;top:1.5px;line-height:16px;font-size:11px;color:#111;font-weight:normal;white-space:nowrap;letter-spacing:-0.363px;">Signal message</div>
<div style="position:absolute;left:421px;top:1.5px;line-height:16px;font-size:11px;color:#505050;font-weight:normal;white-space:nowrap;letter-spacing:0.007px;">12/06/2020 12:27:28 pm (UTC+0)</div>
<div style="position:absolute;left:613px;top:1.5px;line-height:16px;font-size:11px;color:#111;font-weight:normal;white-space:nowrap;">Хотелось бы в это верить</div>
<div style="position:absolute;left:1133px;top:1.5px;line-height:16px;font-size:11px;color:#111;font-weight:normal;white-space:nowrap;letter-spacing:-0.107px;">Magica Gipnoz &lt;79E30311-7D1...</div>
</div>
<div style="position:absolute;left:0;top:224px;width:1309px;height:21px;background:#eef1f2">
<svg style="position:absolute;left:5px;top:4px" width="13" height="13" viewBox="0 0 13 13"><rect x="0.5" y="0.5" width="12" height="12" fill="#fff" stroke="#333" stroke-width="1"/><path d="M2.5 6.5 L5 9.5 L10.5 3" fill="none" stroke="#333" stroke-width="1.3"/></svg>
<svg style="position:absolute;left:28.80000000000001px;top:1.9px" width="16" height="16" viewBox="0 0 16 16"><polygon points="8.00,0.40 10.23,4.93 15.23,5.65 11.61,9.17 12.47,14.15 8.00,11.80 3.53,14.15 4.39,9.17 0.77,5.65 5.77,4.93" fill="none" stroke="#bdbdbd" stroke-width="1.15" stroke-linejoin="miter"/></svg>
<svg style="position:absolute;left:184px;top:2px" width="16" height="16" viewBox="0 0 16 16"><rect x="0" y="0" width="16" height="16" rx="3" fill="#2f86ea"/><path d="M8 3 C10.9 3 13 5 13 7.8 C13 10.6 10.9 12.6 8 12.6 C7.2 12.6 6.5 12.45 5.9 12.2 L3.4 13 L4.1 10.8 C3.4 10 3 9 3 7.8 C3 5 5.1 3 8 3 Z" fill="#f0f0f0"/></svg>
<svg style="position:absolute;left:232px;top:4px" width="12" height="12" viewBox="0 0 12 12"><circle cx="6" cy="6" r="6" fill="#f7842e"/><path d="M8.8 3.2 L3.8 8.2 M3.4 4.6 V8.6 H7.4" fill="none" stroke="#fff" stroke-width="1.6"/></svg>
<svg style="position:absolute;left:275px;top:2px" width="17" height="15" viewBox="0 0 17 15"><path d="M6.6 10.6 C3.5 10.2 0.8 8.3 0.8 5.7 C0.8 2.8 4.1 0.6 8.2 0.6 C12.3 0.6 15.6 2.8 15.6 5.7 C15.6 8.6 12.3 10.8 8.2 10.8 L5.2 13.6 Z" fill="none" stroke="#1aa3e8" stroke-width="1.15" stroke-linejoin="round"/><circle cx="5.3" cy="5.6" r="0.85" fill="#1aa3e8"/><circle cx="8.2" cy="5.6" r="0.85" fill="#1aa3e8"/><circle cx="11.1" cy="5.6" r="0.85" fill="#1aa3e8"/></svg>
<div style="position:absolute;left:297px;top:1.5px;line-height:16px;font-size:11px;color:#111;font-weight:normal;white-space:nowrap;letter-spacing:-0.363px;">Signal message</div>
<div style="position:absolute;left:421px;top:1.5px;line-height:16px;font-size:11px;color:#505050;font-weight:normal;white-space:nowrap;letter-spacing:0.007px;">12/06/2020 12:27:59 pm (UTC+0)</div>
<div style="position:absolute;left:613px;top:1.5px;line-height:16px;font-size:11px;color:#111;font-weight:normal;white-space:nowrap;">Ой, я там 300 лет не была уже</div>
<div style="position:absolute;left:1133px;top:1.5px;line-height:16px;font-size:11px;color:#111;font-weight:normal;white-space:nowrap;letter-spacing:-0.107px;">Magica Gipnoz &lt;79E30311-7D1...</div>
</div>
<div style="position:absolute;left:0;top:245px;width:1309px;height:21px;background:#fff">
<svg style="position:absolute;left:5px;top:4px" width="13" height="13" viewBox="0 0 13 13"><rect x="0.5" y="0.5" width="12" height="12" fill="#fff" stroke="#333" stroke-width="1"/><path d="M2.5 6.5 L5 9.5 L10.5 3" fill="none" stroke="#333" stroke-width="1.3"/></svg>
<svg style="position:absolute;left:28.80000000000001px;top:1.9px" width="16" height="16" viewBox="0 0 16 16"><polygon points="8.00,0.40 10.23,4.93 15.23,5.65 11.61,9.17 12.47,14.15 8.00,11.80 3.53,14.15 4.39,9.17 0.77,5.65 5.77,4.93" fill="none" stroke="#bdbdbd" stroke-width="1.15" stroke-linejoin="miter"/></svg>
<svg style="position:absolute;left:184px;top:2px" width="16" height="16" viewBox="0 0 16 16"><rect x="0" y="0" width="16" height="16" rx="3" fill="#2f86ea"/><path d="M8 3 C10.9 3 13 5 13 7.8 C13 10.6 10.9 12.6 8 12.6 C7.2 12.6 6.5 12.45 5.9 12.2 L3.4 13 L4.1 10.8 C3.4 10 3 9 3 7.8 C3 5 5.1 3 8 3 Z" fill="#f0f0f0"/></svg>
<svg style="position:absolute;left:232px;top:4px" width="12" height="12" viewBox="0 0 12 12"><circle cx="6" cy="6" r="6" fill="#f7842e"/><path d="M8.8 3.2 L3.8 8.2 M3.4 4.6 V8.6 H7.4" fill="none" stroke="#fff" stroke-width="1.6"/></svg>
<svg style="position:absolute;left:275px;top:2px" width="17" height="15" viewBox="0 0 17 15"><path d="M6.6 10.6 C3.5 10.2 0.8 8.3 0.8 5.7 C0.8 2.8 4.1 0.6 8.2 0.6 C12.3 0.6 15.6 2.8 15.6 5.7 C15.6 8.6 12.3 10.8 8.2 10.8 L5.2 13.6 Z" fill="none" stroke="#1aa3e8" stroke-width="1.15" stroke-linejoin="round"/><circle cx="5.3" cy="5.6" r="0.85" fill="#1aa3e8"/><circle cx="8.2" cy="5.6" r="0.85" fill="#1aa3e8"/><circle cx="11.1" cy="5.6" r="0.85" fill="#1aa3e8"/></svg>
<div style="position:absolute;left:297px;top:1.5px;line-height:16px;font-size:11px;color:#111;font-weight:normal;white-space:nowrap;letter-spacing:-0.363px;">Signal message</div>
<div style="position:absolute;left:421px;top:1.5px;line-height:16px;font-size:11px;color:#505050;font-weight:normal;white-space:nowrap;letter-spacing:0.007px;">12/06/2020 12:28:17 pm (UTC+0)</div>
<div style="position:absolute;left:613px;top:1.5px;line-height:16px;font-size:11px;color:#111;font-weight:normal;white-space:nowrap;">Лучше в мессенджеры пиши, если что</div>
<div style="position:absolute;left:1133px;top:1.5px;line-height:16px;font-size:11px;color:#111;font-weight:normal;white-space:nowrap;letter-spacing:-0.107px;">Magica Gipnoz &lt;79E30311-7D1...</div>
</div>
<div style="position:absolute;left:0;top:266px;width:1309px;height:21px;background:#eef1f2">
<svg style="position:absolute;left:5px;top:4px" width="13" height="13" viewBox="0 0 13 13"><rect x="0.5" y="0.5" width="12" height="12" fill="#fff" stroke="#333" stroke-width="1"/><path d="M2.5 6.5 L5 9.5 L10.5 3" fill="none" stroke="#333" stroke-width="1.3"/></svg>
<svg style="position:absolute;left:28.80000000000001px;top:1.9px" width="16" height="16" viewBox="0 0 16 16"><polygon points="8.00,0.40 10.23,4.93 15.23,5.65 11.61,9.17 12.47,14.15 8.00,11.80 3.53,14.15 4.39,9.17 0.77,5.65 5.77,4.93" fill="none" stroke="#bdbdbd" stroke-width="1.15" stroke-linejoin="miter"/></svg>
<svg style="position:absolute;left:184px;top:2px" width="16" height="16" viewBox="0 0 16 16"><rect x="0" y="0" width="16" height="16" rx="3" fill="#2f86ea"/><path d="M8 3 C10.9 3 13 5 13 7.8 C13 10.6 10.9 12.6 8 12.6 C7.2 12.6 6.5 12.45 5.9 12.2 L3.4 13 L4.1 10.8 C3.4 10 3 9 3 7.8 C3 5 5.1 3 8 3 Z" fill="#f0f0f0"/></svg>
<svg style="position:absolute;left:232px;top:4px" width="12" height="12" viewBox="0 0 12 12"><circle cx="6" cy="6" r="6" fill="#f7842e"/><path d="M8.8 3.2 L3.8 8.2 M3.4 4.6 V8.6 H7.4" fill="none" stroke="#fff" stroke-width="1.6"/></svg>
<svg style="position:absolute;left:275px;top:2px" width="17" height="15" viewBox="0 0 17 15"><path d="M6.6 10.6 C3.5 10.2 0.8 8.3 0.8 5.7 C0.8 2.8 4.1 0.6 8.2 0.6 C12.3 0.6 15.6 2.8 15.6 5.7 C15.6 8.6 12.3 10.8 8.2 10.8 L5.2 13.6 Z" fill="none" stroke="#1aa3e8" stroke-width="1.15" stroke-linejoin="round"/><circle cx="5.3" cy="5.6" r="0.85" fill="#1aa3e8"/><circle cx="8.2" cy="5.6" r="0.85" fill="#1aa3e8"/><circle cx="11.1" cy="5.6" r="0.85" fill="#1aa3e8"/></svg>
<div style="position:absolute;left:297px;top:1.5px;line-height:16px;font-size:11px;color:#111;font-weight:normal;white-space:nowrap;letter-spacing:-0.363px;">Signal message</div>
<div style="position:absolute;left:421px;top:1.5px;line-height:16px;font-size:11px;color:#505050;font-weight:normal;white-space:nowrap;letter-spacing:0.007px;">12/06/2020 12:29:00 pm (UTC+0)</div>
<div style="position:absolute;left:613px;top:1.5px;line-height:16px;font-size:11px;color:#111;font-weight:normal;white-space:nowrap;">Вроде да, но тоже последний раз только после поездки на Мальдивы там была</div>
<div style="position:absolute;left:1133px;top:1.5px;line-height:16px;font-size:11px;color:#111;font-weight:normal;white-space:nowrap;letter-spacing:-0.107px;">Magica Gipnoz &lt;79E30311-7D1...</div>
</div>
<div style="position:absolute;left:0;top:287px;width:1309px;height:21px;background:#fff">
<svg style="position:absolute;left:5px;top:4px" width="13" height="13" viewBox="0 0 13 13"><rect x="0.5" y="0.5" width="12" height="12" fill="#fff" stroke="#333" stroke-width="1"/><path d="M2.5 6.5 L5 9.5 L10.5 3" fill="none" stroke="#333" stroke-width="1.3"/></svg>
<svg style="position:absolute;left:28.80000000000001px;top:1.9px" width="16" height="16" viewBox="0 0 16 16"><polygon points="8.00,0.40 10.23,4.93 15.23,5.65 11.61,9.17 12.47,14.15 8.00,11.80 3.53,14.15 4.39,9.17 0.77,5.65 5.77,4.93" fill="none" stroke="#bdbdbd" stroke-width="1.15" stroke-linejoin="miter"/></svg>
<svg style="position:absolute;left:184px;top:2px" width="16" height="16" viewBox="0 0 16 16"><rect x="0" y="0" width="16" height="16" rx="3" fill="#2f86ea"/><path d="M8 3 C10.9 3 13 5 13 7.8 C13 10.6 10.9 12.6 8 12.6 C7.2 12.6 6.5 12.45 5.9 12.2 L3.4 13 L4.1 10.8 C3.4 10 3 9 3 7.8 C3 5 5.1 3 8 3 Z" fill="#f0f0f0"/></svg>
<svg style="position:absolute;left:232px;top:4px" width="12" height="12" viewBox="0 0 12 12"><circle cx="6" cy="6" r="6" fill="#f7842e"/><path d="M8.8 3.2 L3.8 8.2 M3.4 4.6 V8.6 H7.4" fill="none" stroke="#fff" stroke-width="1.6"/></svg>
<svg style="position:absolute;left:275px;top:2px" width="17" height="15" viewBox="0 0 17 15"><path d="M6.6 10.6 C3.5 10.2 0.8 8.3 0.8 5.7 C0.8 2.8 4.1 0.6 8.2 0.6 C12.3 0.6 15.6 2.8 15.6 5.7 C15.6 8.6 12.3 10.8 8.2 10.8 L5.2 13.6 Z" fill="none" stroke="#1aa3e8" stroke-width="1.15" stroke-linejoin="round"/><circle cx="5.3" cy="5.6" r="0.85" fill="#1aa3e8"/><circle cx="8.2" cy="5.6" r="0.85" fill="#1aa3e8"/><circle cx="11.1" cy="5.6" r="0.85" fill="#1aa3e8"/></svg>
<div style="position:absolute;left:297px;top:1.5px;line-height:16px;font-size:11px;color:#111;font-weight:normal;white-space:nowrap;letter-spacing:-0.363px;">Signal message</div>
<div style="position:absolute;left:421px;top:1.5px;line-height:16px;font-size:11px;color:#505050;font-weight:normal;white-space:nowrap;letter-spacing:0.007px;">12/06/2020 12:29:29 pm (UTC+0)</div>
<div style="position:absolute;left:613px;top:1.5px;line-height:16px;font-size:11px;color:#111;font-weight:normal;white-space:nowrap;">Ладно-ладно</div>
<div style="position:absolute;left:1133px;top:1.5px;line-height:16px;font-size:11px;color:#111;font-weight:normal;white-space:nowrap;letter-spacing:-0.107px;">Magica Gipnoz &lt;79E30311-7D1...</div>
</div>
<div style="position:absolute;left:0;top:308px;width:1309px;height:21px;background:#eef1f2">
<svg style="position:absolute;left:5px;top:4px" width="13" height="13" viewBox="0 0 13 13"><rect x="0.5" y="0.5" width="12" height="12" fill="#fff" stroke="#333" stroke-width="1"/><path d="M2.5 6.5 L5 9.5 L10.5 3" fill="none" stroke="#333" stroke-width="1.3"/></svg>
<svg style="position:absolute;left:28.80000000000001px;top:1.9px" width="16" height="16" viewBox="0 0 16 16"><polygon points="8.00,0.40 10.23,4.93 15.23,5.65 11.61,9.17 12.47,14.15 8.00,11.80 3.53,14.15 4.39,9.17 0.77,5.65 5.77,4.93" fill="none" stroke="#bdbdbd" stroke-width="1.15" stroke-linejoin="miter"/></svg>
<svg style="position:absolute;left:184px;top:2px" width="16" height="16" viewBox="0 0 16 16"><rect x="0" y="0" width="16" height="16" rx="3" fill="#2f86ea"/><path d="M8 3 C10.9 3 13 5 13 7.8 C13 10.6 10.9 12.6 8 12.6 C7.2 12.6 6.5 12.45 5.9 12.2 L3.4 13 L4.1 10.8 C3.4 10 3 9 3 7.8 C3 5 5.1 3 8 3 Z" fill="#f0f0f0"/></svg>
<svg style="position:absolute;left:232px;top:4px" width="12" height="12" viewBox="0 0 12 12"><circle cx="6" cy="6" r="6" fill="#f7842e"/><path d="M8.8 3.2 L3.8 8.2 M3.4 4.6 V8.6 H7.4" fill="none" stroke="#fff" stroke-width="1.6"/></svg>
<svg style="position:absolute;left:275px;top:2px" width="17" height="15" viewBox="0 0 17 15"><path d="M6.6 10.6 C3.5 10.2 0.8 8.3 0.8 5.7 C0.8 2.8 4.1 0.6 8.2 0.6 C12.3 0.6 15.6 2.8 15.6 5.7 C15.6 8.6 12.3 10.8 8.2 10.8 L5.2 13.6 Z" fill="none" stroke="#1aa3e8" stroke-width="1.15" stroke-linejoin="round"/><circle cx="5.3" cy="5.6" r="0.85" fill="#1aa3e8"/><circle cx="8.2" cy="5.6" r="0.85" fill="#1aa3e8"/><circle cx="11.1" cy="5.6" r="0.85" fill="#1aa3e8"/></svg>
<div style="position:absolute;left:297px;top:1.5px;line-height:16px;font-size:11px;color:#111;font-weight:normal;white-space:nowrap;letter-spacing:-0.363px;">Signal message</div>
<div style="position:absolute;left:421px;top:1.5px;line-height:16px;font-size:11px;color:#505050;font-weight:normal;white-space:nowrap;letter-spacing:0.007px;">12/06/2020 12:31:01 pm (UTC+0)</div>
<div style="position:absolute;left:613px;top:1.5px;line-height:16px;font-size:11px;color:#111;font-weight:normal;white-space:nowrap;">Пади прикола. Посмотреть, чем отличается, от всех остальных</div>
<div style="position:absolute;left:1133px;top:1.5px;line-height:16px;font-size:11px;color:#111;font-weight:normal;white-space:nowrap;letter-spacing:-0.107px;">Magica Gipnoz &lt;79E30311-7D1...</div>
</div>
<div style="position:absolute;left:0;top:329px;width:1309px;height:21px;background:#fff">
<svg style="position:absolute;left:5px;top:4px" width="13" height="13" viewBox="0 0 13 13"><rect x="0.5" y="0.5" width="12" height="12" fill="#fff" stroke="#333" stroke-width="1"/><path d="M2.5 6.5 L5 9.5 L10.5 3" fill="none" stroke="#333" stroke-width="1.3"/></svg>
<svg style="position:absolute;left:28.80000000000001px;top:1.9px" width="16" height="16" viewBox="0 0 16 16"><polygon points="8.00,0.40 10.23,4.93 15.23,5.65 11.61,9.17 12.47,14.15 8.00,11.80 3.53,14.15 4.39,9.17 0.77,5.65 5.77,4.93" fill="none" stroke="#bdbdbd" stroke-width="1.15" stroke-linejoin="miter"/></svg>
<svg style="position:absolute;left:184px;top:2px" width="16" height="16" viewBox="0 0 16 16"><rect x="0" y="0" width="16" height="16" rx="3" fill="#2f86ea"/><path d="M8 3 C10.9 3 13 5 13 7.8 C13 10.6 10.9 12.6 8 12.6 C7.2 12.6 6.5 12.45 5.9 12.2 L3.4 13 L4.1 10.8 C3.4 10 3 9 3 7.8 C3 5 5.1 3 8 3 Z" fill="#f0f0f0"/></svg>
<svg style="position:absolute;left:232px;top:4px" width="12" height="12" viewBox="0 0 12 12"><circle cx="6" cy="6" r="6" fill="#f7842e"/><path d="M8.8 3.2 L3.8 8.2 M3.4 4.6 V8.6 H7.4" fill="none" stroke="#fff" stroke-width="1.6"/></svg>
<svg style="position:absolute;left:275px;top:2px" width="17" height="15" viewBox="0 0 17 15"><path d="M6.6 10.6 C3.5 10.2 0.8 8.3 0.8 5.7 C0.8 2.8 4.1 0.6 8.2 0.6 C12.3 0.6 15.6 2.8 15.6 5.7 C15.6 8.6 12.3 10.8 8.2 10.8 L5.2 13.6 Z" fill="none" stroke="#1aa3e8" stroke-width="1.15" stroke-linejoin="round"/><circle cx="5.3" cy="5.6" r="0.85" fill="#1aa3e8"/><circle cx="8.2" cy="5.6" r="0.85" fill="#1aa3e8"/><circle cx="11.1" cy="5.6" r="0.85" fill="#1aa3e8"/></svg>
<div style="position:absolute;left:297px;top:1.5px;line-height:16px;font-size:11px;color:#111;font-weight:normal;white-space:nowrap;letter-spacing:-0.363px;">Signal message</div>
<div style="position:absolute;left:421px;top:1.5px;line-height:16px;font-size:11px;color:#505050;font-weight:normal;white-space:nowrap;letter-spacing:0.007px;">12/06/2020 12:31:25 pm (UTC+0)</div>
<div style="position:absolute;left:613px;top:1.5px;line-height:16px;font-size:11px;color:#111;font-weight:normal;white-space:nowrap;">Можно</div>
<div style="position:absolute;left:1133px;top:1.5px;line-height:16px;font-size:11px;color:#111;font-weight:normal;white-space:nowrap;letter-spacing:-0.107px;">Magica Gipnoz &lt;79E30311-7D1...</div>
</div>
<div style="position:absolute;left:0;top:350px;width:1309px;height:21px;background:#eef1f2">
<svg style="position:absolute;left:5px;top:4px" width="13" height="13" viewBox="0 0 13 13"><rect x="0.5" y="0.5" width="12" height="12" fill="#fff" stroke="#333" stroke-width="1"/><path d="M2.5 6.5 L5 9.5 L10.5 3" fill="none" stroke="#333" stroke-width="1.3"/></svg>
<svg style="position:absolute;left:28.80000000000001px;top:1.9px" width="16" height="16" viewBox="0 0 16 16"><polygon points="8.00,0.40 10.23,4.93 15.23,5.65 11.61,9.17 12.47,14.15 8.00,11.80 3.53,14.15 4.39,9.17 0.77,5.65 5.77,4.93" fill="none" stroke="#bdbdbd" stroke-width="1.15" stroke-linejoin="miter"/></svg>
<svg style="position:absolute;left:184px;top:2px" width="16" height="16" viewBox="0 0 16 16"><rect x="0" y="0" width="16" height="16" rx="3" fill="#2f86ea"/><path d="M8 3 C10.9 3 13 5 13 7.8 C13 10.6 10.9 12.6 8 12.6 C7.2 12.6 6.5 12.45 5.9 12.2 L3.4 13 L4.1 10.8 C3.4 10 3 9 3 7.8 C3 5 5.1 3 8 3 Z" fill="#f0f0f0"/></svg>
<svg style="position:absolute;left:232px;top:4px" width="12" height="12" viewBox="0 0 12 12"><circle cx="6" cy="6" r="6" fill="#f7842e"/><path d="M8.8 3.2 L3.8 8.2 M3.4 4.6 V8.6 H7.4" fill="none" stroke="#fff" stroke-width="1.6"/></svg>
<svg style="position:absolute;left:275px;top:2px" width="17" height="15" viewBox="0 0 17 15"><path d="M6.6 10.6 C3.5 10.2 0.8 8.3 0.8 5.7 C0.8 2.8 4.1 0.6 8.2 0.6 C12.3 0.6 15.6 2.8 15.6 5.7 C15.6 8.6 12.3 10.8 8.2 10.8 L5.2 13.6 Z" fill="none" stroke="#1aa3e8" stroke-width="1.15" stroke-linejoin="round"/><circle cx="5.3" cy="5.6" r="0.85" fill="#1aa3e8"/><circle cx="8.2" cy="5.6" r="0.85" fill="#1aa3e8"/><circle cx="11.1" cy="5.6" r="0.85" fill="#1aa3e8"/></svg>
<div style="position:absolute;left:297px;top:1.5px;line-height:16px;font-size:11px;color:#111;font-weight:normal;white-space:nowrap;letter-spacing:-0.363px;">Signal message</div>
<div style="position:absolute;left:421px;top:1.5px;line-height:16px;font-size:11px;color:#505050;font-weight:normal;white-space:nowrap;letter-spacing:0.007px;">12/06/2020 12:31:34 pm (UTC+0)</div>
<div style="position:absolute;left:613px;top:1.5px;line-height:16px;font-size:11px;color:#111;font-weight:normal;white-space:nowrap;">А где?</div>
<div style="position:absolute;left:1133px;top:1.5px;line-height:16px;font-size:11px;color:#111;font-weight:normal;white-space:nowrap;letter-spacing:-0.107px;">Magica Gipnoz &lt;79E30311-7D1...</div>
</div>
<div style="position:absolute;left:0;top:371px;width:1309px;height:21px;background:#fff">
<svg style="position:absolute;left:5px;top:4px" width="13" height="13" viewBox="0 0 13 13"><rect x="0.5" y="0.5" width="12" height="12" fill="#fff" stroke="#333" stroke-width="1"/><path d="M2.5 6.5 L5 9.5 L10.5 3" fill="none" stroke="#333" stroke-width="1.3"/></svg>
<svg style="position:absolute;left:28.80000000000001px;top:1.9px" width="16" height="16" viewBox="0 0 16 16"><polygon points="8.00,0.40 10.23,4.93 15.23,5.65 11.61,9.17 12.47,14.15 8.00,11.80 3.53,14.15 4.39,9.17 0.77,5.65 5.77,4.93" fill="none" stroke="#bdbdbd" stroke-width="1.15" stroke-linejoin="miter"/></svg>
<svg style="position:absolute;left:184px;top:2px" width="16" height="16" viewBox="0 0 16 16"><rect x="0" y="0" width="16" height="16" rx="3" fill="#2f86ea"/><path d="M8 3 C10.9 3 13 5 13 7.8 C13 10.6 10.9 12.6 8 12.6 C7.2 12.6 6.5 12.45 5.9 12.2 L3.4 13 L4.1 10.8 C3.4 10 3 9 3 7.8 C3 5 5.1 3 8 3 Z" fill="#f0f0f0"/></svg>
<svg style="position:absolute;left:232px;top:4px" width="12" height="12" viewBox="0 0 12 12"><circle cx="6" cy="6" r="6" fill="#f7842e"/><path d="M8.8 3.2 L3.8 8.2 M3.4 4.6 V8.6 H7.4" fill="none" stroke="#fff" stroke-width="1.6"/></svg>
<svg style="position:absolute;left:275px;top:2px" width="17" height="15" viewBox="0 0 17 15"><path d="M6.6 10.6 C3.5 10.2 0.8 8.3 0.8 5.7 C0.8 2.8 4.1 0.6 8.2 0.6 C12.3 0.6 15.6 2.8 15.6 5.7 C15.6 8.6 12.3 10.8 8.2 10.8 L5.2 13.6 Z" fill="none" stroke="#1aa3e8" stroke-width="1.15" stroke-linejoin="round"/><circle cx="5.3" cy="5.6" r="0.85" fill="#1aa3e8"/><circle cx="8.2" cy="5.6" r="0.85" fill="#1aa3e8"/><circle cx="11.1" cy="5.6" r="0.85" fill="#1aa3e8"/></svg>
<div style="position:absolute;left:297px;top:1.5px;line-height:16px;font-size:11px;color:#111;font-weight:normal;white-space:nowrap;letter-spacing:-0.363px;">Signal message</div>
<div style="position:absolute;left:421px;top:1.5px;line-height:16px;font-size:11px;color:#505050;font-weight:normal;white-space:nowrap;letter-spacing:0.007px;">12/06/2020 12:31:44 pm (UTC+0)</div>
<div style="position:absolute;left:613px;top:1.5px;line-height:16px;font-size:11px;color:#111;font-weight:normal;white-space:nowrap;">Всё закрыто ещё</div>
<div style="position:absolute;left:1133px;top:1.5px;line-height:16px;font-size:11px;color:#111;font-weight:normal;white-space:nowrap;letter-spacing:-0.107px;">Magica Gipnoz &lt;79E30311-7D1...</div>
</div>
<div style="position:absolute;left:0;top:392px;width:1309px;height:21px;background:#eef1f2">
<svg style="position:absolute;left:5px;top:4px" width="13" height="13" viewBox="0 0 13 13"><rect x="0.5" y="0.5" width="12" height="12" fill="#fff" stroke="#333" stroke-width="1"/><path d="M2.5 6.5 L5 9.5 L10.5 3" fill="none" stroke="#333" stroke-width="1.3"/></svg>
<svg style="position:absolute;left:28.80000000000001px;top:1.9px" width="16" height="16" viewBox="0 0 16 16"><polygon points="8.00,0.40 10.23,4.93 15.23,5.65 11.61,9.17 12.47,14.15 8.00,11.80 3.53,14.15 4.39,9.17 0.77,5.65 5.77,4.93" fill="none" stroke="#bdbdbd" stroke-width="1.15" stroke-linejoin="miter"/></svg>
<svg style="position:absolute;left:184px;top:2px" width="16" height="16" viewBox="0 0 16 16"><rect x="0" y="0" width="16" height="16" rx="3" fill="#2f86ea"/><path d="M8 3 C10.9 3 13 5 13 7.8 C13 10.6 10.9 12.6 8 12.6 C7.2 12.6 6.5 12.45 5.9 12.2 L3.4 13 L4.1 10.8 C3.4 10 3 9 3 7.8 C3 5 5.1 3 8 3 Z" fill="#f0f0f0"/></svg>
<svg style="position:absolute;left:232px;top:4px" width="12" height="12" viewBox="0 0 12 12"><circle cx="6" cy="6" r="6" fill="#f7842e"/><path d="M8.8 3.2 L3.8 8.2 M3.4 4.6 V8.6 H7.4" fill="none" stroke="#fff" stroke-width="1.6"/></svg>
<svg style="position:absolute;left:275px;top:2px" width="17" height="15" viewBox="0 0 17 15"><path d="M6.6 10.6 C3.5 10.2 0.8 8.3 0.8 5.7 C0.8 2.8 4.1 0.6 8.2 0.6 C12.3 0.6 15.6 2.8 15.6 5.7 C15.6 8.6 12.3 10.8 8.2 10.8 L5.2 13.6 Z" fill="none" stroke="#1aa3e8" stroke-width="1.15" stroke-linejoin="round"/><circle cx="5.3" cy="5.6" r="0.85" fill="#1aa3e8"/><circle cx="8.2" cy="5.6" r="0.85" fill="#1aa3e8"/><circle cx="11.1" cy="5.6" r="0.85" fill="#1aa3e8"/></svg>
<div style="position:absolute;left:297px;top:1.5px;line-height:16px;font-size:11px;color:#111;font-weight:normal;white-space:nowrap;letter-spacing:-0.363px;">Signal message</div>
<div style="position:absolute;left:421px;top:1.5px;line-height:16px;font-size:11px;color:#505050;font-weight:normal;white-space:nowrap;letter-spacing:0.007px;">12/06/2020 12:32:07 pm (UTC+0)</div>
<div style="position:absolute;left:613px;top:1.5px;line-height:16px;font-size:11px;color:#111;font-weight:normal;white-space:nowrap;">Ага. Под дождём?</div>
<div style="position:absolute;left:1133px;top:1.5px;line-height:16px;font-size:11px;color:#111;font-weight:normal;white-space:nowrap;letter-spacing:-0.107px;">Magica Gipnoz &lt;79E30311-7D1...</div>
</div>
<div style="position:absolute;left:0;top:413px;width:1309px;height:21px;background:#fff">
<svg style="position:absolute;left:5px;top:4px" width="13" height="13" viewBox="0 0 13 13"><rect x="0.5" y="0.5" width="12" height="12" fill="#fff" stroke="#333" stroke-width="1"/><path d="M2.5 6.5 L5 9.5 L10.5 3" fill="none" stroke="#333" stroke-width="1.3"/></svg>
<svg style="position:absolute;left:28.80000000000001px;top:1.9px" width="16" height="16" viewBox="0 0 16 16"><polygon points="8.00,0.40 10.23,4.93 15.23,5.65 11.61,9.17 12.47,14.15 8.00,11.80 3.53,14.15 4.39,9.17 0.77,5.65 5.77,4.93" fill="none" stroke="#bdbdbd" stroke-width="1.15" stroke-linejoin="miter"/></svg>
<svg style="position:absolute;left:184px;top:2px" width="16" height="16" viewBox="0 0 16 16"><rect x="0" y="0" width="16" height="16" rx="3" fill="#2f86ea"/><path d="M8 3 C10.9 3 13 5 13 7.8 C13 10.6 10.9 12.6 8 12.6 C7.2 12.6 6.5 12.45 5.9 12.2 L3.4 13 L4.1 10.8 C3.4 10 3 9 3 7.8 C3 5 5.1 3 8 3 Z" fill="#f0f0f0"/></svg>
<svg style="position:absolute;left:232px;top:4px" width="12" height="12" viewBox="0 0 12 12"><circle cx="6" cy="6" r="6" fill="#f7842e"/><path d="M8.8 3.2 L3.8 8.2 M3.4 4.6 V8.6 H7.4" fill="none" stroke="#fff" stroke-width="1.6"/></svg>
<svg style="position:absolute;left:275px;top:2px" width="17" height="15" viewBox="0 0 17 15"><path d="M6.6 10.6 C3.5 10.2 0.8 8.3 0.8 5.7 C0.8 2.8 4.1 0.6 8.2 0.6 C12.3 0.6 15.6 2.8 15.6 5.7 C15.6 8.6 12.3 10.8 8.2 10.8 L5.2 13.6 Z" fill="none" stroke="#1aa3e8" stroke-width="1.15" stroke-linejoin="round"/><circle cx="5.3" cy="5.6" r="0.85" fill="#1aa3e8"/><circle cx="8.2" cy="5.6" r="0.85" fill="#1aa3e8"/><circle cx="11.1" cy="5.6" r="0.85" fill="#1aa3e8"/></svg>
<div style="position:absolute;left:297px;top:1.5px;line-height:16px;font-size:11px;color:#111;font-weight:normal;white-space:nowrap;letter-spacing:-0.363px;">Signal message</div>
<div style="position:absolute;left:421px;top:1.5px;line-height:16px;font-size:11px;color:#505050;font-weight:normal;white-space:nowrap;letter-spacing:0.007px;">12/06/2020 12:32:40 pm (UTC+0)</div>
<div style="position:absolute;left:613px;top:1.5px;line-height:16px;font-size:11px;color:#111;font-weight:normal;white-space:nowrap;">Давай созвонимся и что-нибудь придумаем</div>
<div style="position:absolute;left:1133px;top:1.5px;line-height:16px;font-size:11px;color:#111;font-weight:normal;white-space:nowrap;letter-spacing:-0.107px;">Magica Gipnoz &lt;79E30311-7D1...</div>
</div>
<div style="position:absolute;left:0;top:434px;width:1309px;height:21px;background:#eef1f2">
<svg style="position:absolute;left:5px;top:4px" width="13" height="13" viewBox="0 0 13 13"><rect x="0.5" y="0.5" width="12" height="12" fill="#fff" stroke="#333" stroke-width="1"/><path d="M2.5 6.5 L5 9.5 L10.5 3" fill="none" stroke="#333" stroke-width="1.3"/></svg>
<svg style="position:absolute;left:28.80000000000001px;top:1.9px" width="16" height="16" viewBox="0 0 16 16"><polygon points="8.00,0.40 10.23,4.93 15.23,5.65 11.61,9.17 12.47,14.15 8.00,11.80 3.53,14.15 4.39,9.17 0.77,5.65 5.77,4.93" fill="none" stroke="#bdbdbd" stroke-width="1.15" stroke-linejoin="miter"/></svg>
<svg style="position:absolute;left:184px;top:2px" width="16" height="16" viewBox="0 0 16 16"><rect x="0" y="0" width="16" height="16" rx="3" fill="#2f86ea"/><path d="M8 3 C10.9 3 13 5 13 7.8 C13 10.6 10.9 12.6 8 12.6 C7.2 12.6 6.5 12.45 5.9 12.2 L3.4 13 L4.1 10.8 C3.4 10 3 9 3 7.8 C3 5 5.1 3 8 3 Z" fill="#f0f0f0"/></svg>
<svg style="position:absolute;left:232px;top:4px" width="12" height="12" viewBox="0 0 12 12"><circle cx="6" cy="6" r="6" fill="#f7842e"/><path d="M8.8 3.2 L3.8 8.2 M3.4 4.6 V8.6 H7.4" fill="none" stroke="#fff" stroke-width="1.6"/></svg>
<svg style="position:absolute;left:275px;top:2px" width="17" height="15" viewBox="0 0 17 15"><path d="M6.6 10.6 C3.5 10.2 0.8 8.3 0.8 5.7 C0.8 2.8 4.1 0.6 8.2 0.6 C12.3 0.6 15.6 2.8 15.6 5.7 C15.6 8.6 12.3 10.8 8.2 10.8 L5.2 13.6 Z" fill="none" stroke="#1aa3e8" stroke-width="1.15" stroke-linejoin="round"/><circle cx="5.3" cy="5.6" r="0.85" fill="#1aa3e8"/><circle cx="8.2" cy="5.6" r="0.85" fill="#1aa3e8"/><circle cx="11.1" cy="5.6" r="0.85" fill="#1aa3e8"/></svg>
<div style="position:absolute;left:297px;top:1.5px;line-height:16px;font-size:11px;color:#111;font-weight:normal;white-space:nowrap;letter-spacing:-0.363px;">Signal message</div>
<div style="position:absolute;left:421px;top:1.5px;line-height:16px;font-size:11px;color:#505050;font-weight:normal;white-space:nowrap;letter-spacing:0.007px;">12/06/2020 12:35:55 pm (UTC+0)</div>
<div style="position:absolute;left:613px;top:1.5px;line-height:16px;font-size:11px;color:#111;font-weight:normal;white-space:nowrap;">Договорились, собираюсь</div>
<div style="position:absolute;left:1133px;top:1.5px;line-height:16px;font-size:11px;color:#111;font-weight:normal;white-space:nowrap;letter-spacing:-0.107px;">Magica Gipnoz &lt;79E30311-7D1...</div>
</div>
<div style="position:absolute;left:0;top:455px;width:1309px;height:21px;background:#fff">
<svg style="position:absolute;left:5px;top:4px" width="13" height="13" viewBox="0 0 13 13"><rect x="0.5" y="0.5" width="12" height="12" fill="#fff" stroke="#333" stroke-width="1"/><path d="M2.5 6.5 L5 9.5 L10.5 3" fill="none" stroke="#333" stroke-width="1.3"/></svg>
<svg style="position:absolute;left:28.80000000000001px;top:1.9px" width="16" height="16" viewBox="0 0 16 16"><polygon points="8.00,0.40 10.23,4.93 15.23,5.65 11.61,9.17 12.47,14.15 8.00,11.80 3.53,14.15 4.39,9.17 0.77,5.65 5.77,4.93" fill="none" stroke="#bdbdbd" stroke-width="1.15" stroke-linejoin="miter"/></svg>
<svg style="position:absolute;left:184px;top:2px" width="16" height="16" viewBox="0 0 16 16"><rect x="0" y="0" width="16" height="16" rx="3" fill="#2f86ea"/><path d="M8 3 C10.9 3 13 5 13 7.8 C13 10.6 10.9 12.6 8 12.6 C7.2 12.6 6.5 12.45 5.9 12.2 L3.4 13 L4.1 10.8 C3.4 10 3 9 3 7.8 C3 5 5.1 3 8 3 Z" fill="#f0f0f0"/></svg>
<svg style="position:absolute;left:232px;top:4px" width="12" height="12" viewBox="0 0 12 12"><circle cx="6" cy="6" r="6" fill="#f7842e"/><path d="M8.8 3.2 L3.8 8.2 M3.4 4.6 V8.6 H7.4" fill="none" stroke="#fff" stroke-width="1.6"/></svg>
<svg style="position:absolute;left:275px;top:2px" width="17" height="15" viewBox="0 0 17 15"><path d="M6.6 10.6 C3.5 10.2 0.8 8.3 0.8 5.7 C0.8 2.8 4.1 0.6 8.2 0.6 C12.3 0.6 15.6 2.8 15.6 5.7 C15.6 8.6 12.3 10.8 8.2 10.8 L5.2 13.6 Z" fill="none" stroke="#1aa3e8" stroke-width="1.15" stroke-linejoin="round"/><circle cx="5.3" cy="5.6" r="0.85" fill="#1aa3e8"/><circle cx="8.2" cy="5.6" r="0.85" fill="#1aa3e8"/><circle cx="11.1" cy="5.6" r="0.85" fill="#1aa3e8"/></svg>
<div style="position:absolute;left:297px;top:1.5px;line-height:16px;font-size:11px;color:#111;font-weight:normal;white-space:nowrap;letter-spacing:-0.363px;">Signal message</div>
<div style="position:absolute;left:421px;top:1.5px;line-height:16px;font-size:11px;color:#505050;font-weight:normal;white-space:nowrap;letter-spacing:0.007px;">12/06/2020 12:36:27 pm (UTC+0)</div>
<svg style="position:absolute;left:615px;top:5px" width="10" height="10" viewBox="0 0 10 10"><circle cx="5" cy="5" r="4.3" fill="none" stroke="#333" stroke-width="0.9"/><path d="M2.8 4 L4.2 4.3 M6.2 3.6 L7.5 4.6" stroke="#333" stroke-width="0.8"/><path d="M4.5 6.5 L5.7 7 L4.6 7.6" fill="none" stroke="#333" stroke-width="0.8"/></svg>
<div style="position:absolute;left:1133px;top:1.5px;line-height:16px;font-size:11px;color:#111;font-weight:normal;white-space:nowrap;letter-spacing:-0.107px;">Magica Gipnoz &lt;79E30311-7D1...</div>
</div>
<div style="position:absolute;left:0;top:476px;width:1309px;height:21px;background:#eef1f2">
<svg style="position:absolute;left:5px;top:4px" width="13" height="13" viewBox="0 0 13 13"><rect x="0.5" y="0.5" width="12" height="12" fill="#fff" stroke="#333" stroke-width="1"/><path d="M2.5 6.5 L5 9.5 L10.5 3" fill="none" stroke="#333" stroke-width="1.3"/></svg>
<svg style="position:absolute;left:28.80000000000001px;top:1.9px" width="16" height="16" viewBox="0 0 16 16"><polygon points="8.00,0.40 10.23,4.93 15.23,5.65 11.61,9.17 12.47,14.15 8.00,11.80 3.53,14.15 4.39,9.17 0.77,5.65 5.77,4.93" fill="none" stroke="#bdbdbd" stroke-width="1.15" stroke-linejoin="miter"/></svg>
<svg style="position:absolute;left:184px;top:2px" width="16" height="16" viewBox="0 0 16 16"><rect x="0" y="0" width="16" height="16" rx="3" fill="#2f86ea"/><path d="M8 3 C10.9 3 13 5 13 7.8 C13 10.6 10.9 12.6 8 12.6 C7.2 12.6 6.5 12.45 5.9 12.2 L3.4 13 L4.1 10.8 C3.4 10 3 9 3 7.8 C3 5 5.1 3 8 3 Z" fill="#f0f0f0"/></svg>
<svg style="position:absolute;left:232px;top:4px" width="12" height="12" viewBox="0 0 12 12"><circle cx="6" cy="6" r="6" fill="#f7842e"/><path d="M8.8 3.2 L3.8 8.2 M3.4 4.6 V8.6 H7.4" fill="none" stroke="#fff" stroke-width="1.6"/></svg>
<svg style="position:absolute;left:275px;top:2px" width="17" height="15" viewBox="0 0 17 15"><path d="M6.6 10.6 C3.5 10.2 0.8 8.3 0.8 5.7 C0.8 2.8 4.1 0.6 8.2 0.6 C12.3 0.6 15.6 2.8 15.6 5.7 C15.6 8.6 12.3 10.8 8.2 10.8 L5.2 13.6 Z" fill="none" stroke="#1aa3e8" stroke-width="1.15" stroke-linejoin="round"/><circle cx="5.3" cy="5.6" r="0.85" fill="#1aa3e8"/><circle cx="8.2" cy="5.6" r="0.85" fill="#1aa3e8"/><circle cx="11.1" cy="5.6" r="0.85" fill="#1aa3e8"/></svg>
<div style="position:absolute;left:297px;top:1.5px;line-height:16px;font-size:11px;color:#111;font-weight:normal;white-space:nowrap;letter-spacing:-0.363px;">Signal message</div>
<div style="position:absolute;left:421px;top:1.5px;line-height:16px;font-size:11px;color:#505050;font-weight:normal;white-space:nowrap;letter-spacing:0.007px;">12/09/2020 12:59:29 pm (UTC+0)</div>
<div style="position:absolute;left:613px;top:1.5px;line-height:16px;font-size:11px;color:#111;font-weight:normal;white-space:nowrap;">Хэллоу! Как дела?</div>
<div style="position:absolute;left:1133px;top:1.5px;line-height:16px;font-size:11px;color:#111;font-weight:normal;white-space:nowrap;letter-spacing:0.074px;">Игорь Петров &lt;80D8AC3F-83...</div>
</div>
<div style="position:absolute;left:0;top:497px;width:1309px;height:21px;background:#fff">
<svg style="position:absolute;left:5px;top:4px" width="13" height="13" viewBox="0 0 13 13"><rect x="0.5" y="0.5" width="12" height="12" fill="#fff" stroke="#333" stroke-width="1"/><path d="M2.5 6.5 L5 9.5 L10.5 3" fill="none" stroke="#333" stroke-width="1.3"/></svg>
<svg style="position:absolute;left:28.80000000000001px;top:1.9px" width="16" height="16" viewBox="0 0 16 16"><polygon points="8.00,0.40 10.23,4.93 15.23,5.65 11.61,9.17 12.47,14.15 8.00,11.80 3.53,14.15 4.39,9.17 0.77,5.65 5.77,4.93" fill="none" stroke="#bdbdbd" stroke-width="1.15" stroke-linejoin="miter"/></svg>
<svg style="position:absolute;left:184px;top:2px" width="16" height="16" viewBox="0 0 16 16"><circle cx="8" cy="8" r="8" fill="#2e9fd9"/><path d="M3.6 7.9 L11.7 4.6 C12.1 4.5 12.4 4.7 12.3 5.2 L11 11.2 C10.9 11.6 10.6 11.7 10.3 11.5 L8.2 10 L7.2 11 C7.1 11.1 7 11.2 6.8 11.2 L7 9.1 L10.6 5.9 L6.1 8.6 L4 8 C3.5 7.9 3.5 8.1 3.6 7.9Z" fill="#fff"/></svg>
<svg style="position:absolute;left:232px;top:4px" width="12" height="12" viewBox="0 0 12 12"><circle cx="6" cy="6" r="6" fill="#f7842e"/><path d="M8.8 3.2 L3.8 8.2 M3.4 4.6 V8.6 H7.4" fill="none" stroke="#fff" stroke-width="1.6"/></svg>
<svg style="position:absolute;left:275px;top:2px" width="17" height="15" viewBox="0 0 17 15"><path d="M6.6 10.6 C3.5 10.2 0.8 8.3 0.8 5.7 C0.8 2.8 4.1 0.6 8.2 0.6 C12.3 0.6 15.6 2.8 15.6 5.7 C15.6 8.6 12.3 10.8 8.2 10.8 L5.2 13.6 Z" fill="none" stroke="#1aa3e8" stroke-width="1.15" stroke-linejoin="round"/><circle cx="5.3" cy="5.6" r="0.85" fill="#1aa3e8"/><circle cx="8.2" cy="5.6" r="0.85" fill="#1aa3e8"/><circle cx="11.1" cy="5.6" r="0.85" fill="#1aa3e8"/></svg>
<div style="position:absolute;left:297px;top:1.5px;line-height:16px;font-size:11px;color:#111;font-weight:normal;white-space:nowrap;letter-spacing:-0.246px;">Telegram message</div>
<div style="position:absolute;left:421px;top:1.5px;line-height:16px;font-size:11px;color:#505050;font-weight:normal;white-space:nowrap;letter-spacing:0.034px;">12/06/2020 11:01:01 am (UTC+0)</div>
<div style="position:absolute;left:613px;top:1.5px;line-height:16px;font-size:11px;color:#111;font-weight:normal;white-space:nowrap;letter-spacing:0.154px;">Ты удивишься, но тут вообще без авки<svg width="11" height="11" viewBox="-0.5 -0.5 11 11" style="vertical-align:-1.5px;margin-left:0.5px;overflow:visible"><circle cx="5" cy="5" r="4.3" fill="none" stroke="#333" stroke-width="0.9"/><circle cx="3.5" cy="4" r="0.6" fill="#333"/><circle cx="6.5" cy="4" r="0.6" fill="#333"/><path d="M3.2 7 H6.8" stroke="#333" stroke-width="0.8"/></svg></div>
<div style="position:absolute;left:1133px;top:1.5px;line-height:16px;font-size:11px;color:#111;font-weight:normal;white-space:nowrap;letter-spacing:-0.114px;">Magica Gipnoz &lt;775478716&gt;</div>
</div>
<div style="position:absolute;left:0;top:518px;width:1309px;height:21px;background:#eef1f2">
<svg style="position:absolute;left:5px;top:4px" width="13" height="13" viewBox="0 0 13 13"><rect x="0.5" y="0.5" width="12" height="12" fill="#fff" stroke="#333" stroke-width="1"/><path d="M2.5 6.5 L5 9.5 L10.5 3" fill="none" stroke="#333" stroke-width="1.3"/></svg>
<svg style="position:absolute;left:28.80000000000001px;top:1.9px" width="16" height="16" viewBox="0 0 16 16"><polygon points="8.00,0.40 10.23,4.93 15.23,5.65 11.61,9.17 12.47,14.15 8.00,11.80 3.53,14.15 4.39,9.17 0.77,5.65 5.77,4.93" fill="none" stroke="#bdbdbd" stroke-width="1.15" stroke-linejoin="miter"/></svg>
<svg style="position:absolute;left:184px;top:2px" width="16" height="16" viewBox="0 0 16 16"><circle cx="8" cy="8" r="8" fill="#2e9fd9"/><path d="M3.6 7.9 L11.7 4.6 C12.1 4.5 12.4 4.7 12.3 5.2 L11 11.2 C10.9 11.6 10.6 11.7 10.3 11.5 L8.2 10 L7.2 11 C7.1 11.1 7 11.2 6.8 11.2 L7 9.1 L10.6 5.9 L6.1 8.6 L4 8 C3.5 7.9 3.5 8.1 3.6 7.9Z" fill="#fff"/></svg>
<svg style="position:absolute;left:232px;top:4px" width="12" height="12" viewBox="0 0 12 12"><circle cx="6" cy="6" r="6" fill="#f7842e"/><path d="M8.8 3.2 L3.8 8.2 M3.4 4.6 V8.6 H7.4" fill="none" stroke="#fff" stroke-width="1.6"/></svg>
<svg style="position:absolute;left:275px;top:2px" width="17" height="15" viewBox="0 0 17 15"><path d="M6.6 10.6 C3.5 10.2 0.8 8.3 0.8 5.7 C0.8 2.8 4.1 0.6 8.2 0.6 C12.3 0.6 15.6 2.8 15.6 5.7 C15.6 8.6 12.3 10.8 8.2 10.8 L5.2 13.6 Z" fill="none" stroke="#1aa3e8" stroke-width="1.15" stroke-linejoin="round"/><circle cx="5.3" cy="5.6" r="0.85" fill="#1aa3e8"/><circle cx="8.2" cy="5.6" r="0.85" fill="#1aa3e8"/><circle cx="11.1" cy="5.6" r="0.85" fill="#1aa3e8"/></svg>
<div style="position:absolute;left:297px;top:1.5px;line-height:16px;font-size:11px;color:#111;font-weight:normal;white-space:nowrap;letter-spacing:-0.246px;">Telegram message</div>
<div style="position:absolute;left:421px;top:1.5px;line-height:16px;font-size:11px;color:#505050;font-weight:normal;white-space:nowrap;letter-spacing:0.034px;">12/06/2020 11:14:56 am (UTC+0)</div>
<div style="position:absolute;left:613px;top:1.5px;line-height:16px;font-size:11px;color:#111;font-weight:normal;white-space:nowrap;">Ок</div>
<div style="position:absolute;left:1133px;top:1.5px;line-height:16px;font-size:11px;color:#111;font-weight:normal;white-space:nowrap;letter-spacing:-0.114px;">Magica Gipnoz &lt;775478716&gt;</div>
</div>
<div style="position:absolute;left:0;top:539px;width:1309px;height:21px;background:#fff">
<svg style="position:absolute;left:5px;top:4px" width="13" height="13" viewBox="0 0 13 13"><rect x="0.5" y="0.5" width="12" height="12" fill="#fff" stroke="#333" stroke-width="1"/><path d="M2.5 6.5 L5 9.5 L10.5 3" fill="none" stroke="#333" stroke-width="1.3"/></svg>
<svg style="position:absolute;left:28.80000000000001px;top:1.9px" width="16" height="16" viewBox="0 0 16 16"><polygon points="8.00,0.40 10.23,4.93 15.23,5.65 11.61,9.17 12.47,14.15 8.00,11.80 3.53,14.15 4.39,9.17 0.77,5.65 5.77,4.93" fill="none" stroke="#bdbdbd" stroke-width="1.15" stroke-linejoin="miter"/></svg>
<svg style="position:absolute;left:184px;top:2px" width="16" height="16" viewBox="0 0 16 16"><circle cx="8" cy="8" r="8" fill="#2e9fd9"/><path d="M3.6 7.9 L11.7 4.6 C12.1 4.5 12.4 4.7 12.3 5.2 L11 11.2 C10.9 11.6 10.6 11.7 10.3 11.5 L8.2 10 L7.2 11 C7.1 11.1 7 11.2 6.8 11.2 L7 9.1 L10.6 5.9 L6.1 8.6 L4 8 C3.5 7.9 3.5 8.1 3.6 7.9Z" fill="#fff"/></svg>
<svg style="position:absolute;left:232px;top:4px" width="12" height="12" viewBox="0 0 12 12"><circle cx="6" cy="6" r="6" fill="#f7842e"/><path d="M8.8 3.2 L3.8 8.2 M3.4 4.6 V8.6 H7.4" fill="none" stroke="#fff" stroke-width="1.6"/></svg>
<svg style="position:absolute;left:275px;top:2px" width="17" height="15" viewBox="0 0 17 15"><path d="M6.6 10.6 C3.5 10.2 0.8 8.3 0.8 5.7 C0.8 2.8 4.1 0.6 8.2 0.6 C12.3 0.6 15.6 2.8 15.6 5.7 C15.6 8.6 12.3 10.8 8.2 10.8 L5.2 13.6 Z" fill="none" stroke="#1aa3e8" stroke-width="1.15" stroke-linejoin="round"/><circle cx="5.3" cy="5.6" r="0.85" fill="#1aa3e8"/><circle cx="8.2" cy="5.6" r="0.85" fill="#1aa3e8"/><circle cx="11.1" cy="5.6" r="0.85" fill="#1aa3e8"/></svg>
<div style="position:absolute;left:297px;top:1.5px;line-height:16px;font-size:11px;color:#111;font-weight:normal;white-space:nowrap;letter-spacing:-0.246px;">Telegram message</div>
<div style="position:absolute;left:421px;top:1.5px;line-height:16px;font-size:11px;color:#505050;font-weight:normal;white-space:nowrap;letter-spacing:0.034px;">12/06/2020 11:14:59 am (UTC+0)</div>
<div style="position:absolute;left:613px;top:1.5px;line-height:16px;font-size:11px;color:#111;font-weight:normal;white-space:nowrap;">Подписалась</div>
<div style="position:absolute;left:1133px;top:1.5px;line-height:16px;font-size:11px;color:#111;font-weight:normal;white-space:nowrap;letter-spacing:-0.114px;">Magica Gipnoz &lt;775478716&gt;</div>
</div>
<div style="position:absolute;left:0;top:560px;width:1309px;height:21px;background:#eef1f2">
<svg style="position:absolute;left:5px;top:4px" width="13" height="13" viewBox="0 0 13 13"><rect x="0.5" y="0.5" width="12" height="12" fill="#fff" stroke="#333" stroke-width="1"/><path d="M2.5 6.5 L5 9.5 L10.5 3" fill="none" stroke="#333" stroke-width="1.3"/></svg>
<svg style="position:absolute;left:28.80000000000001px;top:1.9px" width="16" height="16" viewBox="0 0 16 16"><polygon points="8.00,0.40 10.23,4.93 15.23,5.65 11.61,9.17 12.47,14.15 8.00,11.80 3.53,14.15 4.39,9.17 0.77,5.65 5.77,4.93" fill="none" stroke="#bdbdbd" stroke-width="1.15" stroke-linejoin="miter"/></svg>
<svg style="position:absolute;left:184px;top:2px" width="16" height="16" viewBox="0 0 16 16"><circle cx="8" cy="8" r="8" fill="#2e9fd9"/><path d="M3.6 7.9 L11.7 4.6 C12.1 4.5 12.4 4.7 12.3 5.2 L11 11.2 C10.9 11.6 10.6 11.7 10.3 11.5 L8.2 10 L7.2 11 C7.1 11.1 7 11.2 6.8 11.2 L7 9.1 L10.6 5.9 L6.1 8.6 L4 8 C3.5 7.9 3.5 8.1 3.6 7.9Z" fill="#fff"/></svg>
<svg style="position:absolute;left:232px;top:4px" width="12" height="12" viewBox="0 0 12 12"><circle cx="6" cy="6" r="6" fill="#f7842e"/><path d="M8.8 3.2 L3.8 8.2 M3.4 4.6 V8.6 H7.4" fill="none" stroke="#fff" stroke-width="1.6"/></svg>
<svg style="position:absolute;left:275px;top:2px" width="17" height="15" viewBox="0 0 17 15"><path d="M6.6 10.6 C3.5 10.2 0.8 8.3 0.8 5.7 C0.8 2.8 4.1 0.6 8.2 0.6 C12.3 0.6 15.6 2.8 15.6 5.7 C15.6 8.6 12.3 10.8 8.2 10.8 L5.2 13.6 Z" fill="none" stroke="#1aa3e8" stroke-width="1.15" stroke-linejoin="round"/><circle cx="5.3" cy="5.6" r="0.85" fill="#1aa3e8"/><circle cx="8.2" cy="5.6" r="0.85" fill="#1aa3e8"/><circle cx="11.1" cy="5.6" r="0.85" fill="#1aa3e8"/></svg>
<div style="position:absolute;left:297px;top:1.5px;line-height:16px;font-size:11px;color:#111;font-weight:normal;white-space:nowrap;letter-spacing:-0.246px;">Telegram message</div>
<div style="position:absolute;left:421px;top:1.5px;line-height:16px;font-size:11px;color:#505050;font-weight:normal;white-space:nowrap;letter-spacing:0.034px;">12/06/2020 11:16:18 am (UTC+0)</div>
<div style="position:absolute;left:613px;top:1.5px;line-height:16px;font-size:11px;color:#111;font-weight:normal;white-space:nowrap;">Помню-помню<svg width="11" height="11" viewBox="-0.5 -0.5 11 11" style="vertical-align:-1.5px;margin-left:0.5px;overflow:visible"><circle cx="5" cy="5" r="4.3" fill="none" stroke="#333" stroke-width="0.9"/><path d="M2.8 4 H4.2 M5.8 4 H7.2" stroke="#333" stroke-width="0.8"/><path d="M3 6 Q5 8.3 7 6" fill="none" stroke="#333" stroke-width="0.8"/></svg><svg width="11" height="11" viewBox="-0.5 -0.5 11 11" style="vertical-align:-1.5px;margin-left:0.5px;overflow:visible"><circle cx="5" cy="5" r="4.3" fill="none" stroke="#333" stroke-width="0.9"/><path d="M2.8 4 H4.2 M5.8 4 H7.2" stroke="#333" stroke-width="0.8"/><path d="M3 6 Q5 8.3 7 6" fill="none" stroke="#333" stroke-width="0.8"/></svg><svg width="11" height="11" viewBox="-0.5 -0.5 11 11" style="vertical-align:-1.5px;margin-left:0.5px;overflow:visible"><circle cx="5" cy="5" r="4.3" fill="none" stroke="#333" stroke-width="0.9"/><path d="M2.8 4 H4.2 M5.8 4 H7.2" stroke="#333" stroke-width="0.8"/><path d="M3 6 Q5 8.3 7 6" fill="none" stroke="#333" stroke-width="0.8"/></svg></div>
<div style="position:absolute;left:1133px;top:1.5px;line-height:16px;font-size:11px;color:#111;font-weight:normal;white-space:nowrap;letter-spacing:-0.114px;">Magica Gipnoz &lt;775478716&gt;</div>
</div>
<div style="position:absolute;left:0;top:581px;width:1309px;height:21px;background:#fff">
<svg style="position:absolute;left:5px;top:4px" width="13" height="13" viewBox="0 0 13 13"><rect x="0.5" y="0.5" width="12" height="12" fill="#fff" stroke="#333" stroke-width="1"/><path d="M2.5 6.5 L5 9.5 L10.5 3" fill="none" stroke="#333" stroke-width="1.3"/></svg>
<svg style="position:absolute;left:28.80000000000001px;top:1.9px" width="16" height="16" viewBox="0 0 16 16"><polygon points="8.00,0.40 10.23,4.93 15.23,5.65 11.61,9.17 12.47,14.15 8.00,11.80 3.53,14.15 4.39,9.17 0.77,5.65 5.77,4.93" fill="none" stroke="#bdbdbd" stroke-width="1.15" stroke-linejoin="miter"/></svg>
<svg style="position:absolute;left:137px;top:3px" width="16" height="16" viewBox="0 0 16 16"><path transform="translate(7.6 8.4) rotate(-45) scale(0.9)" d="M-5 -3 H7 A3 3 0 0 1 7 3 H-7 A2 2 0 0 1 -7 -1 H4 A1 1 0 0 1 4 1 H-3" fill="none" stroke="#2aa5e0" stroke-width="1.35" stroke-linecap="round"/></svg>
<svg style="position:absolute;left:184px;top:2px" width="16" height="16" viewBox="0 0 16 16"><circle cx="8" cy="8" r="8" fill="#2e9fd9"/><path d="M3.6 7.9 L11.7 4.6 C12.1 4.5 12.4 4.7 12.3 5.2 L11 11.2 C10.9 11.6 10.6 11.7 10.3 11.5 L8.2 10 L7.2 11 C7.1 11.1 7 11.2 6.8 11.2 L7 9.1 L10.6 5.9 L6.1 8.6 L4 8 C3.5 7.9 3.5 8.1 3.6 7.9Z" fill="#fff"/></svg>
<svg style="position:absolute;left:232px;top:4px" width="12" height="12" viewBox="0 0 12 12"><circle cx="6" cy="6" r="6" fill="#f7842e"/><path d="M8.8 3.2 L3.8 8.2 M3.4 4.6 V8.6 H7.4" fill="none" stroke="#fff" stroke-width="1.6"/></svg>
<svg style="position:absolute;left:275px;top:2px" width="17" height="15" viewBox="0 0 17 15"><path d="M6.6 10.6 C3.5 10.2 0.8 8.3 0.8 5.7 C0.8 2.8 4.1 0.6 8.2 0.6 C12.3 0.6 15.6 2.8 15.6 5.7 C15.6 8.6 12.3 10.8 8.2 10.8 L5.2 13.6 Z" fill="none" stroke="#1aa3e8" stroke-width="1.15" stroke-linejoin="round"/><circle cx="5.3" cy="5.6" r="0.85" fill="#1aa3e8"/><circle cx="8.2" cy="5.6" r="0.85" fill="#1aa3e8"/><circle cx="11.1" cy="5.6" r="0.85" fill="#1aa3e8"/></svg>
<div style="position:absolute;left:297px;top:1.5px;line-height:16px;font-size:11px;color:#111;font-weight:normal;white-space:nowrap;letter-spacing:-0.246px;">Telegram message</div>
<div style="position:absolute;left:421px;top:1.5px;line-height:16px;font-size:11px;color:#505050;font-weight:normal;white-space:nowrap;letter-spacing:0.034px;">12/06/2020 11:16:54 am (UTC+0)</div>
<svg style="position:absolute;left:615px;top:3px" width="16" height="16" viewBox="0 0 16 16"><path transform="translate(7.6 8.4) rotate(-45) scale(0.9)" d="M-5 -3 H7 A3 3 0 0 1 7 3 H-7 A2 2 0 0 1 -7 -1 H4 A1 1 0 0 1 4 1 H-3" fill="none" stroke="#1aa3e8" stroke-width="1.35" stroke-linecap="round"/></svg>
<div style="position:absolute;left:637px;top:1.5px;line-height:16px;font-size:11px;color:#111;font-weight:normal;white-space:nowrap;letter-spacing:-0.058px;">telegram-cloud-document-2-5411387398271534585</div>
<div style="position:absolute;left:1133px;top:1.5px;line-height:16px;font-size:11px;color:#111;font-weight:normal;white-space:nowrap;letter-spacing:-0.114px;">Magica Gipnoz &lt;775478716&gt;</div>
</div>
<div style="position:absolute;left:0;top:602px;width:1309px;height:21px;background:#eef1f2">
<svg style="position:absolute;left:5px;top:4px" width="13" height="13" viewBox="0 0 13 13"><rect x="0.5" y="0.5" width="12" height="12" fill="#fff" stroke="#333" stroke-width="1"/><path d="M2.5 6.5 L5 9.5 L10.5 3" fill="none" stroke="#333" stroke-width="1.3"/></svg>
<svg style="position:absolute;left:28.80000000000001px;top:1.9px" width="16" height="16" viewBox="0 0 16 16"><polygon points="8.00,0.40 10.23,4.93 15.23,5.65 11.61,9.17 12.47,14.15 8.00,11.80 3.53,14.15 4.39,9.17 0.77,5.65 5.77,4.93" fill="none" stroke="#bdbdbd" stroke-width="1.15" stroke-linejoin="miter"/></svg>
<svg style="position:absolute;left:137px;top:3px" width="16" height="16" viewBox="0 0 16 16"><path transform="translate(7.6 8.4) rotate(-45) scale(0.9)" d="M-5 -3 H7 A3 3 0 0 1 7 3 H-7 A2 2 0 0 1 -7 -1 H4 A1 1 0 0 1 4 1 H-3" fill="none" stroke="#2aa5e0" stroke-width="1.35" stroke-linecap="round"/></svg>
<svg style="position:absolute;left:184px;top:2px" width="16" height="16" viewBox="0 0 16 16"><circle cx="8" cy="8" r="8" fill="#2e9fd9"/><path d="M3.6 7.9 L11.7 4.6 C12.1 4.5 12.4 4.7 12.3 5.2 L11 11.2 C10.9 11.6 10.6 11.7 10.3 11.5 L8.2 10 L7.2 11 C7.1 11.1 7 11.2 6.8 11.2 L7 9.1 L10.6 5.9 L6.1 8.6 L4 8 C3.5 7.9 3.5 8.1 3.6 7.9Z" fill="#fff"/></svg>
<svg style="position:absolute;left:232px;top:4px" width="12" height="12" viewBox="0 0 12 12"><circle cx="6" cy="6" r="6" fill="#f7842e"/><path d="M8.8 3.2 L3.8 8.2 M3.4 4.6 V8.6 H7.4" fill="none" stroke="#fff" stroke-width="1.6"/></svg>
<svg style="position:absolute;left:275px;top:2px" width="17" height="15" viewBox="0 0 17 15"><path d="M6.6 10.6 C3.5 10.2 0.8 8.3 0.8 5.7 C0.8 2.8 4.1 0.6 8.2 0.6 C12.3 0.6 15.6 2.8 15.6 5.7 C15.6 8.6 12.3 10.8 8.2 10.8 L5.2 13.6 Z" fill="none" stroke="#1aa3e8" stroke-width="1.15" stroke-linejoin="round"/><circle cx="5.3" cy="5.6" r="0.85" fill="#1aa3e8"/><circle cx="8.2" cy="5.6" r="0.85" fill="#1aa3e8"/><circle cx="11.1" cy="5.6" r="0.85" fill="#1aa3e8"/></svg>
<div style="position:absolute;left:297px;top:1.5px;line-height:16px;font-size:11px;color:#111;font-weight:normal;white-space:nowrap;letter-spacing:-0.246px;">Telegram message</div>
<div style="position:absolute;left:421px;top:1.5px;line-height:16px;font-size:11px;color:#505050;font-weight:normal;white-space:nowrap;letter-spacing:0.034px;">12/06/2020 11:16:54 am (UTC+0)</div>
<svg style="position:absolute;left:615px;top:3px" width="16" height="16" viewBox="0 0 16 16"><path transform="translate(7.6 8.4) rotate(-45) scale(0.9)" d="M-5 -3 H7 A3 3 0 0 1 7 3 H-7 A2 2 0 0 1 -7 -1 H4 A1 1 0 0 1 4 1 H-3" fill="none" stroke="#1aa3e8" stroke-width="1.35" stroke-linecap="round"/></svg>
<div style="position:absolute;left:637px;top:1.5px;line-height:16px;font-size:11px;color:#111;font-weight:normal;white-space:nowrap;">Получено 2 файлов</div>
<div style="position:absolute;left:1133px;top:1.5px;line-height:16px;font-size:11px;color:#111;font-weight:normal;white-space:nowrap;letter-spacing:-0.114px;">Magica Gipnoz &lt;775478716&gt;</div>
</div>
<div style="position:absolute;left:0;top:623px;width:1309px;height:21px;background:#fff">
<svg style="position:absolute;left:5px;top:4px" width="13" height="13" viewBox="0 0 13 13"><rect x="0.5" y="0.5" width="12" height="12" fill="#fff" stroke="#333" stroke-width="1"/><path d="M2.5 6.5 L5 9.5 L10.5 3" fill="none" stroke="#333" stroke-width="1.3"/></svg>
<svg style="position:absolute;left:28.80000000000001px;top:1.9px" width="16" height="16" viewBox="0 0 16 16"><polygon points="8.00,0.40 10.23,4.93 15.23,5.65 11.61,9.17 12.47,14.15 8.00,11.80 3.53,14.15 4.39,9.17 0.77,5.65 5.77,4.93" fill="none" stroke="#bdbdbd" stroke-width="1.15" stroke-linejoin="miter"/></svg>
<svg style="position:absolute;left:137px;top:3px" width="16" height="16" viewBox="0 0 16 16"><path transform="translate(7.6 8.4) rotate(-45) scale(0.9)" d="M-5 -3 H7 A3 3 0 0 1 7 3 H-7 A2 2 0 0 1 -7 -1 H4 A1 1 0 0 1 4 1 H-3" fill="none" stroke="#2aa5e0" stroke-width="1.35" stroke-linecap="round"/></svg>
<svg style="position:absolute;left:184px;top:2px" width="16" height="16" viewBox="0 0 16 16"><circle cx="8" cy="8" r="8" fill="#2e9fd9"/><path d="M3.6 7.9 L11.7 4.6 C12.1 4.5 12.4 4.7 12.3 5.2 L11 11.2 C10.9 11.6 10.6 11.7 10.3 11.5 L8.2 10 L7.2 11 C7.1 11.1 7 11.2 6.8 11.2 L7 9.1 L10.6 5.9 L6.1 8.6 L4 8 C3.5 7.9 3.5 8.1 3.6 7.9Z" fill="#fff"/></svg>
<svg style="position:absolute;left:232px;top:4px" width="12" height="12" viewBox="0 0 12 12"><circle cx="6" cy="6" r="6" fill="#f7842e"/><path d="M8.8 3.2 L3.8 8.2 M3.4 4.6 V8.6 H7.4" fill="none" stroke="#fff" stroke-width="1.6"/></svg>
<svg style="position:absolute;left:275px;top:2px" width="17" height="15" viewBox="0 0 17 15"><path d="M6.6 10.6 C3.5 10.2 0.8 8.3 0.8 5.7 C0.8 2.8 4.1 0.6 8.2 0.6 C12.3 0.6 15.6 2.8 15.6 5.7 C15.6 8.6 12.3 10.8 8.2 10.8 L5.2 13.6 Z" fill="none" stroke="#1aa3e8" stroke-width="1.15" stroke-linejoin="round"/><circle cx="5.3" cy="5.6" r="0.85" fill="#1aa3e8"/><circle cx="8.2" cy="5.6" r="0.85" fill="#1aa3e8"/><circle cx="11.1" cy="5.6" r="0.85" fill="#1aa3e8"/></svg>
<div style="position:absolute;left:297px;top:1.5px;line-height:16px;font-size:11px;color:#111;font-weight:normal;white-space:nowrap;letter-spacing:-0.246px;">Telegram message</div>
<div style="position:absolute;left:421px;top:1.5px;line-height:16px;font-size:11px;color:#505050;font-weight:normal;white-space:nowrap;letter-spacing:0.034px;">12/06/2020 11:16:55 am (UTC+0)</div>
<svg style="position:absolute;left:615px;top:3px" width="16" height="16" viewBox="0 0 16 16"><path transform="translate(7.6 8.4) rotate(-45) scale(0.9)" d="M-5 -3 H7 A3 3 0 0 1 7 3 H-7 A2 2 0 0 1 -7 -1 H4 A1 1 0 0 1 4 1 H-3" fill="none" stroke="#1aa3e8" stroke-width="1.35" stroke-linecap="round"/></svg>
<div style="position:absolute;left:637px;top:1.5px;line-height:16px;font-size:11px;color:#111;font-weight:normal;white-space:nowrap;">Получено 2 файлов</div>
<div style="position:absolute;left:1133px;top:1.5px;line-height:16px;font-size:11px;color:#111;font-weight:normal;white-space:nowrap;letter-spacing:-0.114px;">Magica Gipnoz &lt;775478716&gt;</div>
</div>
</div>
<div style="position:absolute;left:1607px;top:144px;width:16px;height:641px;background:#f0f0f0"></div>
<svg style="position:absolute;left:1610px;top:150px" width="10" height="6" viewBox="0 0 10 6"><path d="M1 5 L5 1 L9 5" fill="none" stroke="#555" stroke-width="2"/></svg>
<div style="position:absolute;left:1607px;top:258px;width:15px;height:17px;background:#cdcdcd"></div>
<svg style="position:absolute;left:1610px;top:773px" width="10" height="6" viewBox="0 0 10 6"><path d="M1 1 L5 5 L9 1" fill="none" stroke="#555" stroke-width="2"/></svg>
<div style="position:absolute;left:297px;top:785px;width:1326px;height:16px;background:#f0f0f0"></div>
<svg style="position:absolute;left:302px;top:789px" width="6" height="9" viewBox="0 0 6 9"><path d="M5 0.5 L1 4.5 L5 8.5" fill="none" stroke="#444" stroke-width="1.5"/></svg>
<div style="position:absolute;left:313px;top:786px;width:837px;height:14px;background:#cdcdcd"></div>
<svg style="position:absolute;left:1595px;top:788px" width="6" height="9" viewBox="0 0 6 9"><path d="M1 0.5 L5 4.5 L1 8.5" fill="none" stroke="#444" stroke-width="1.5"/></svg>
<div style="position:absolute;left:296px;top:832px;width:1328px;height:187px;background:#fff;border:1px solid #d5e0ec;"></div>
<div style="position:absolute;left:296px;top:808px;width:109px;height:25px;background:#18a0e6"></div>
<div style="position:absolute;left:300px;top:812.5px;line-height:16px;font-size:11.1px;color:#fff;font-weight:normal;white-space:nowrap;">Фильтр по времени</div>
<div style="position:absolute;left:410px;top:812.5px;line-height:16px;font-size:11.1px;color:#666;font-weight:normal;white-space:nowrap;">Матрица активности</div>
<div style="position:absolute;left:529px;top:812.5px;line-height:16px;font-size:11.1px;color:#666;font-weight:normal;white-space:nowrap;">Диаграмма активности</div>
<div style="position:absolute;left:1217px;top:811px;width:381px;height:20px;background:#f3f3f3;border:1px solid #cfcfcf"></div>
<div style="position:absolute;left:1224px;top:811.5px;line-height:16px;font-size:11px;color:#111;font-weight:normal;white-space:nowrap;letter-spacing:-0.049px;">Monday, 25 January 2016 12:51 pm - Tuesday, 22 December 2020 8:20 am</div>
<div style="position:absolute;left:1601px;top:811px;width:19px;height:20px;background:#eeeeee"></div>
<svg style="position:absolute;left:1606px;top:816px" width="9" height="9" viewBox="0 0 9 9"><path d="M0.5 0.5 L8.5 8.5 M8.5 0.5 L0.5 8.5" stroke="#aaa" stroke-width="1.2"/></svg>
<div style="position:absolute;left:307px;top:840.0px;line-height:16px;font-size:11.1px;color:#111;font-weight:normal;white-space:nowrap;letter-spacing:0.160px;">Группировать по:</div>
<div style="position:absolute;left:404px;top:840.0px;line-height:16px;font-size:11.1px;color:#666;font-weight:normal;white-space:nowrap;">Год</div>
<div style="position:absolute;left:426px;top:842px;width:1px;height:12px;background:#8aa4c8"></div>
<div style="position:absolute;left:430px;top:840.0px;line-height:16px;font-size:11.1px;color:#666;font-weight:normal;white-space:nowrap;">Месяц</div>
<div style="position:absolute;left:465px;top:842px;width:1px;height:12px;background:#8aa4c8"></div>
<div style="position:absolute;left:469px;top:840.0px;line-height:16px;font-size:11.1px;color:#666;font-weight:normal;white-space:nowrap;">День</div>
<div style="position:absolute;left:498px;top:842px;width:1px;height:12px;background:#8aa4c8"></div>
<div style="position:absolute;left:503px;top:840.0px;line-height:16px;font-size:11.1px;color:#3ba635;font-weight:normal;white-space:nowrap;">Час</div>
<div style="position:absolute;left:307px;top:858px;width:1311px;height:145px;background:#e1e8f5"></div>
<div style="position:absolute;left:307px;top:930px;width:1311px;height:1px;background:#d3d9e3"></div>
<div style="position:absolute;left:300px;top:1003px;width:1322px;height:1px;background:#cfcfcf"></div>
<svg style="position:absolute;left:307px;top:858px" width="1311" height="145" viewBox="0 0 1311 145"><rect x="12" y="142" width="1" height="3" fill="#62c088"/><rect x="21" y="142" width="1" height="3" fill="#62c088"/><rect x="35" y="142" width="1" height="3" fill="#62c088"/><rect x="39" y="142" width="1" height="3" fill="#62c088"/><rect x="174" y="142" width="1" height="3" fill="#62c088"/><rect x="205" y="142" width="1" height="3" fill="#62c088"/><rect x="206" y="142" width="1" height="3" fill="#62c088"/><rect x="335" y="142" width="1" height="3" fill="#62c088"/><rect x="383" y="142" width="1" height="3" fill="#62c088"/><rect x="420" y="142" width="1" height="3" fill="#62c088"/><rect x="424" y="142" width="1" height="3" fill="#62c088"/><rect x="440" y="142" width="1" height="3" fill="#62c088"/><rect x="452" y="142" width="1" height="3" fill="#62c088"/><rect x="462" y="142" width="1" height="3" fill="#62c088"/><rect x="464" y="142" width="1" height="3" fill="#62c088"/><rect x="471" y="142" width="1" height="3" fill="#62c088"/><rect x="474" y="142" width="1" height="3" fill="#62c088"/><rect x="482" y="142" width="1" height="3" fill="#62c088"/><rect x="485" y="142" width="1" height="3" fill="#62c088"/><rect x="499" y="142" width="1" height="3" fill="#62c088"/><rect x="509" y="142" width="1" height="3" fill="#62c088"/><rect x="510" y="142" width="1" height="3" fill="#62c088"/><rect x="516" y="142" width="1" height="3" fill="#62c088"/><rect x="530" y="142" width="1" height="3" fill="#62c088"/><rect x="543" y="142" width="1" height="3" fill="#62c088"/><rect x="546" y="142" width="1" height="3" fill="#62c088"/><rect x="549" y="142" width="1" height="3" fill="#62c088"/><rect x="552" y="142" width="1" height="3" fill="#62c088"/><rect x="555" y="142" width="1" height="3" fill="#62c088"/><rect x="558" y="142" width="1" height="3" fill="#62c088"/><rect x="561" y="142" width="1" height="3" fill="#62c088"/><rect x="564" y="142" width="1" height="3" fill="#62c088"/><rect x="573" y="142" width="1" height="3" fill="#62c088"/><rect x="576" y="142" width="1" height="3" fill="#62c088"/><rect x="578" y="142" width="1" height="3" fill="#62c088"/><rect x="601" y="142" width="1" height="3" fill="#62c088"/><rect x="603" y="142" width="1" height="3" fill="#62c088"/><rect x="606" y="142" width="1" height="3" fill="#62c088"/><rect x="633" y="142" width="1" height="3" fill="#62c088"/><rect x="636" y="142" width="1" height="3" fill="#62c088"/><rect x="649" y="142" width="1" height="3" fill="#62c088"/><rect x="653" y="142" width="1" height="3" fill="#62c088"/><rect x="658" y="142" width="1" height="3" fill="#62c088"/><rect x="678" y="142" width="1" height="3" fill="#62c088"/><rect x="680" y="142" width="1" height="3" fill="#62c088"/><rect x="692" y="142" width="1" height="3" fill="#62c088"/><rect x="708" y="142" width="1" height="3" fill="#62c088"/><rect x="711" y="142" width="1" height="3" fill="#62c088"/><rect x="732" y="142" width="1" height="3" fill="#62c088"/><rect x="734" y="142" width="1" height="3" fill="#62c088"/><rect x="742" y="142" width="1" height="3" fill="#62c088"/><rect x="744" y="142" width="1" height="3" fill="#62c088"/><rect x="747" y="142" width="1" height="3" fill="#62c088"/><rect x="750" y="142" width="1" height="3" fill="#62c088"/><rect x="752" y="142" width="1" height="3" fill="#62c088"/><rect x="798" y="142" width="1" height="3" fill="#62c088"/><rect x="808" y="142" width="1" height="3" fill="#62c088"/><rect x="812" y="142" width="1" height="3" fill="#62c088"/><rect x="834" y="142" width="1" height="3" fill="#62c088"/><rect x="840" y="142" width="1" height="3" fill="#62c088"/><rect x="842" y="142" width="1" height="3" fill="#62c088"/><rect x="845" y="142" width="1" height="3" fill="#62c088"/><rect x="847" y="142" width="1" height="3" fill="#62c088"/><rect x="853" y="142" width="1" height="3" fill="#62c088"/><rect x="886" y="142" width="1" height="3" fill="#62c088"/><rect x="906" y="142" width="1" height="3" fill="#62c088"/><rect x="910" y="142" width="1" height="3" fill="#62c088"/><rect x="613" y="140" width="1" height="5" fill="#62c088"/><rect x="615" y="139" width="1" height="6" fill="#62c088"/><rect x="755" y="139" width="1" height="6" fill="#62c088"/><rect x="756" y="141" width="1" height="4" fill="#62c088"/><rect x="769" y="142" width="4" height="3" fill="#62c088"/><rect x="856" y="142" width="6" height="3" fill="#62c088"/><rect x="865" y="142" width="7" height="3" fill="#62c088"/><rect x="873" y="142" width="5" height="3" fill="#62c088"/><rect x="879" y="142" width="5" height="3" fill="#62c088"/><rect x="891" y="142" width="5" height="3" fill="#62c088"/><rect x="897" y="142" width="6" height="3" fill="#62c088"/><rect x="914" y="142" width="3" height="3" fill="#62c088"/><rect x="918" y="142" width="3" height="3" fill="#62c088"/><rect x="922" y="142" width="5" height="3" fill="#62c088"/><rect x="931" y="142" width="9" height="3" fill="#62c088"/><rect x="945" y="142" width="3" height="3" fill="#62c088"/><rect x="949" y="142" width="4" height="3" fill="#62c088"/><rect x="955" y="142" width="9" height="3" fill="#62c088"/><rect x="965" y="142" width="7" height="3" fill="#62c088"/><rect x="972" y="142" width="6" height="3" fill="#62c088"/><rect x="979" y="142" width="4" height="3" fill="#62c088"/><rect x="984" y="142" width="8" height="3" fill="#62c088"/><rect x="994" y="142" width="5" height="3" fill="#62c088"/><rect x="1000" y="142" width="8" height="3" fill="#62c088"/><rect x="1010" y="142" width="11" height="3" fill="#62c088"/><rect x="1024" y="142" width="24" height="3" fill="#62c088"/><rect x="1049" y="142" width="5" height="3" fill="#62c088"/><rect x="1056" y="142" width="10" height="3" fill="#62c088"/><rect x="1067" y="142" width="4" height="3" fill="#62c088"/><rect x="1072" y="142" width="228" height="3" fill="#62c088"/><rect x="1083" y="140" width="1" height="5" fill="#62c088"/><rect x="1095" y="141" width="1" height="4" fill="#62c088"/><rect x="1098" y="140" width="1" height="5" fill="#62c088"/><rect x="1104" y="141" width="1" height="4" fill="#62c088"/><rect x="1114" y="141" width="1" height="4" fill="#62c088"/><rect x="1120" y="141" width="1" height="4" fill="#62c088"/><rect x="1122" y="140" width="1" height="5" fill="#62c088"/><rect x="1125" y="139" width="1" height="6" fill="#62c088"/><rect x="1130" y="140" width="1" height="5" fill="#62c088"/><rect x="1132" y="141" width="1" height="4" fill="#62c088"/><rect x="1134" y="136" width="1" height="9" fill="#62c088"/><rect x="1136" y="134" width="1" height="11" fill="#62c088"/><rect x="1137" y="134" width="1" height="11" fill="#62c088"/><rect x="1138" y="140" width="1" height="5" fill="#62c088"/><rect x="1139" y="137" width="1" height="8" fill="#62c088"/><rect x="1140" y="137" width="1" height="8" fill="#62c088"/><rect x="1142" y="139" width="1" height="6" fill="#62c088"/><rect x="1144" y="140" width="1" height="5" fill="#62c088"/><rect x="1145" y="141" width="1" height="4" fill="#62c088"/><rect x="1146" y="140" width="1" height="5" fill="#62c088"/><rect x="1147" y="139" width="1" height="6" fill="#62c088"/><rect x="1148" y="138" width="1" height="7" fill="#62c088"/><rect x="1150" y="141" width="1" height="4" fill="#62c088"/><rect x="1151" y="140" width="1" height="5" fill="#62c088"/><rect x="1152" y="138" width="1" height="7" fill="#62c088"/><rect x="1153" y="136" width="1" height="9" fill="#62c088"/><rect x="1154" y="136" width="1" height="9" fill="#62c088"/><rect x="1156" y="137" width="1" height="8" fill="#62c088"/><rect x="1157" y="140" width="1" height="5" fill="#62c088"/><rect x="1158" y="140" width="1" height="5" fill="#62c088"/><rect x="1160" y="140" width="1" height="5" fill="#62c088"/><rect x="1161" y="134" width="1" height="11" fill="#62c088"/><rect x="1162" y="137" width="1" height="8" fill="#62c088"/><rect x="1165" y="141" width="1" height="4" fill="#62c088"/><rect x="1166" y="134" width="1" height="11" fill="#62c088"/><rect x="1168" y="137" width="1" height="8" fill="#62c088"/><rect x="1169" y="136" width="1" height="9" fill="#62c088"/><rect x="1170" y="140" width="1" height="5" fill="#62c088"/><rect x="1173" y="136" width="1" height="9" fill="#62c088"/><rect x="1177" y="140" width="1" height="5" fill="#62c088"/><rect x="1179" y="137" width="1" height="8" fill="#62c088"/><rect x="1180" y="141" width="1" height="4" fill="#62c088"/><rect x="1181" y="139" width="1" height="6" fill="#62c088"/><rect x="1182" y="140" width="1" height="5" fill="#62c088"/><rect x="1183" y="140" width="1" height="5" fill="#62c088"/><rect x="1189" y="141" width="1" height="4" fill="#62c088"/><rect x="1191" y="138" width="1" height="7" fill="#62c088"/><rect x="1194" y="141" width="1" height="4" fill="#62c088"/><rect x="1195" y="139" width="1" height="6" fill="#62c088"/><rect x="1196" y="141" width="1" height="4" fill="#62c088"/><rect x="1197" y="134" width="1" height="11" fill="#62c088"/><rect x="1198" y="141" width="1" height="4" fill="#62c088"/><rect x="1204" y="136" width="1" height="9" fill="#62c088"/><rect x="1207" y="141" width="1" height="4" fill="#62c088"/><rect x="1211" y="141" width="1" height="4" fill="#62c088"/><rect x="1213" y="141" width="1" height="4" fill="#62c088"/><rect x="1217" y="136" width="1" height="9" fill="#62c088"/><rect x="1218" y="134" width="1" height="11" fill="#62c088"/><rect x="1219" y="134" width="1" height="11" fill="#62c088"/><rect x="1220" y="141" width="1" height="4" fill="#62c088"/><rect x="1221" y="140" width="1" height="5" fill="#62c088"/><rect x="1223" y="136" width="1" height="9" fill="#62c088"/><rect x="1224" y="141" width="1" height="4" fill="#62c088"/><rect x="1225" y="140" width="1" height="5" fill="#62c088"/><rect x="1227" y="140" width="1" height="5" fill="#62c088"/><rect x="1229" y="136" width="1" height="9" fill="#62c088"/><rect x="1230" y="140" width="1" height="5" fill="#62c088"/><rect x="1231" y="139" width="1" height="6" fill="#62c088"/><rect x="1232" y="137" width="1" height="8" fill="#62c088"/><rect x="1235" y="140" width="1" height="5" fill="#62c088"/><rect x="1236" y="138" width="1" height="7" fill="#62c088"/><rect x="1237" y="140" width="1" height="5" fill="#62c088"/><rect x="1238" y="141" width="1" height="4" fill="#62c088"/><rect x="1241" y="140" width="1" height="5" fill="#62c088"/><rect x="1242" y="136" width="1" height="9" fill="#62c088"/><rect x="1243" y="140" width="1" height="5" fill="#62c088"/><rect x="1245" y="134" width="1" height="11" fill="#62c088"/><rect x="1246" y="138" width="1" height="7" fill="#62c088"/><rect x="1250" y="141" width="1" height="4" fill="#62c088"/><rect x="1251" y="141" width="1" height="4" fill="#62c088"/><rect x="1253" y="138" width="1" height="7" fill="#62c088"/><rect x="1254" y="141" width="1" height="4" fill="#62c088"/><rect x="1256" y="140" width="1" height="5" fill="#62c088"/><rect x="1257" y="139" width="1" height="6" fill="#62c088"/><rect x="1258" y="140" width="1" height="5" fill="#62c088"/><rect x="1261" y="141" width="1" height="4" fill="#62c088"/><rect x="1267" y="136" width="1" height="9" fill="#62c088"/><rect x="1268" y="141" width="1" height="4" fill="#62c088"/><rect x="1270" y="141" width="1" height="4" fill="#62c088"/><rect x="1271" y="139" width="1" height="6" fill="#62c088"/><rect x="1273" y="134" width="1" height="11" fill="#62c088"/><rect x="1274" y="140" width="1" height="5" fill="#62c088"/><rect x="1275" y="140" width="1" height="5" fill="#62c088"/><rect x="1276" y="137" width="1" height="8" fill="#62c088"/><rect x="1277" y="136" width="1" height="9" fill="#62c088"/><rect x="1278" y="141" width="1" height="4" fill="#62c088"/><rect x="1279" y="134" width="1" height="11" fill="#62c088"/><rect x="1282" y="140" width="1" height="5" fill="#62c088"/><rect x="1283" y="141" width="1" height="4" fill="#62c088"/><rect x="1284" y="137" width="1" height="8" fill="#62c088"/><rect x="1287" y="138" width="1" height="7" fill="#62c088"/><rect x="1288" y="141" width="1" height="4" fill="#62c088"/><rect x="1289" y="141" width="1" height="4" fill="#62c088"/><rect x="1290" y="138" width="1" height="7" fill="#62c088"/><rect x="1293" y="141" width="1" height="4" fill="#62c088"/><rect x="1294" y="141" width="1" height="4" fill="#62c088"/><rect x="1295" y="141" width="1" height="4" fill="#62c088"/><rect x="1296" y="138" width="1" height="7" fill="#62c088"/><rect x="1081" y="134" width="1" height="11" fill="#62c088"/><rect x="1085" y="140" width="1" height="5" fill="#62c088"/><rect x="1090" y="137" width="1" height="8" fill="#62c088"/><rect x="1101" y="134" width="1" height="11" fill="#62c088"/><rect x="1129" y="102" width="1" height="43" fill="#62c088"/><rect x="1159" y="0" width="1" height="145" fill="#62c088"/><rect x="1162" y="123" width="1" height="22" fill="#62c088"/><rect x="1167" y="128" width="1" height="17" fill="#62c088"/><rect x="1182" y="132" width="1" height="13" fill="#62c088"/><rect x="1218" y="126" width="1" height="19" fill="#62c088"/><rect x="1222" y="111" width="1" height="34" fill="#62c088"/><rect x="1227" y="130" width="1" height="15" fill="#62c088"/><rect x="1248" y="93" width="1" height="52" fill="#62c088"/><rect x="1250" y="67" width="1" height="78" fill="#62c088"/><rect x="1247" y="108" width="1" height="37" fill="#62c088"/><rect x="1249" y="108" width="1" height="37" fill="#62c088"/><rect x="1248" y="108" width="1" height="37" fill="#62c088"/><rect x="1268" y="110" width="1" height="35" fill="#62c088"/><rect x="1289" y="129" width="1" height="16" fill="#62c088"/><rect x="1154" y="128" width="1" height="17" fill="#62c088"/><rect x="1171" y="132" width="1" height="13" fill="#62c088"/><rect x="1233" y="132" width="1" height="13" fill="#62c088"/><rect x="1238" y="132" width="1" height="13" fill="#62c088"/><rect x="1261" y="137" width="1" height="8" fill="#62c088"/><rect x="1160" y="126" width="1" height="19" fill="#62c088"/><rect x="1163" y="130" width="1" height="15" fill="#62c088"/></svg>
<div style="position:absolute;left:307px;top:915px;width:1px;height:31px;background:#c4c4c4"></div>
<svg style="position:absolute;left:303.5px;top:923px" width="7" height="15" viewBox="0 0 7 15"><rect x="0" y="0" width="7" height="15" rx="2" fill="#ababab"/><path d="M2.5 3 V12 M4.6 3 V12" stroke="#1e1e1e" stroke-width="1"/></svg>
<div style="position:absolute;left:1618px;top:915px;width:1px;height:31px;background:#c4c4c4"></div>
<svg style="position:absolute;left:1614.5px;top:923px" width="7" height="15" viewBox="0 0 7 15"><rect x="0" y="0" width="7" height="15" rx="2" fill="#ababab"/><path d="M2.5 3 V12 M4.6 3 V12" stroke="#1e1e1e" stroke-width="1"/></svg>
<div style="position:absolute;left:300px;top:1001.5px;line-height:16px;font-size:10px;color:#111;font-weight:normal;white-space:nowrap;letter-spacing:-0.246px;">Monday, 25 January 2016 12:00 pm</div>
<div style="position:absolute;right:297px;top:1001.5px;line-height:16px;font-size:10px;color:#111;font-weight:normal;white-space:nowrap;text-align:right;letter-spacing:-0.281px;">Tuesday, 22 December 2020 8:59 am</div>
<div style="position:absolute;left:1630px;top:94px;width:290px;height:925px;background:#fff;border-left:1px solid #d5e0ec;border-bottom:1px solid #d5e0ec"></div>
<div style="position:absolute;left:1630px;top:94px;width:290px;height:25px;background:#18a0e6"></div>
<svg style="position:absolute;left:1637px;top:101px" width="13" height="10" viewBox="0 0 13 10"><path d="M2 1 L6 5 L2 9 M7 1 L11 5 L7 9" fill="none" stroke="#fff" stroke-width="1.8"/></svg>
<div style="position:absolute;left:1657px;top:99.5px;line-height:16px;font-size:11.1px;color:#fff;font-weight:normal;white-space:nowrap;">Детали</div>
<svg style="position:absolute;left:1643px;top:136px" width="15" height="15" viewBox="0 0 15 15"><polygon points="7.50,0.40 9.46,4.80 14.25,5.31 10.67,8.53 11.67,13.24 7.50,10.84 3.33,13.24 4.33,8.53 0.75,5.31 5.54,4.80" fill="none" stroke="#2aa5e0" stroke-width="1.2" stroke-linejoin="miter"/></svg>
<div style="position:absolute;left:1663px;top:136.0px;line-height:16px;font-size:11.1px;color:#3a8fd6;font-weight:normal;white-space:nowrap;">Важное</div>
<svg style="position:absolute;left:1698px;top:136px" width="16" height="16" viewBox="0 0 16 16"><path d="M14.5 1.5 H9 L1.5 9 L7 14.5 L14.5 7 Z" fill="none" stroke="#2aa5e0" stroke-width="1.1" stroke-linejoin="round"/><circle cx="11.5" cy="4.5" r="1.2" fill="none" stroke="#2aa5e0" stroke-width="1"/></svg>
<div style="position:absolute;left:1724px;top:136.0px;line-height:16px;font-size:11.1px;color:#3a8fd6;font-weight:normal;white-space:nowrap;letter-spacing:0.309px;">Добавить тег</div>
<svg style="position:absolute;left:1797px;top:135px" width="16" height="18" viewBox="0 0 16 18"><path d="M1 1 H9 L13 5 V17 H1 Z" fill="none" stroke="#2aa5e0" stroke-width="1"/><path d="M9 16 L15 10" stroke="#2aa5e0" stroke-width="1.2"/></svg>
<div style="position:absolute;left:1815px;top:136.0px;line-height:16px;font-size:11.1px;color:#3a8fd6;font-weight:normal;white-space:nowrap;letter-spacing:0.192px;">Добавить заме...</div>
<div style="position:absolute;left:1643px;top:158px;width:266px;height:1px;background:#d5e0ec"></div>
<div style="position:absolute;right:204px;top:171.0px;line-height:16px;font-size:11.1px;color:#111;font-weight:bold;white-space:nowrap;text-align:right;">Источник</div>
<div style="position:absolute;right:204px;top:188.0px;line-height:16px;font-size:11.1px;color:#111;font-weight:bold;white-space:nowrap;text-align:right;">Направление</div>
<div style="position:absolute;right:204px;top:205.0px;line-height:16px;font-size:11.1px;color:#111;font-weight:bold;white-space:nowrap;text-align:right;">Тип</div>
<div style="position:absolute;right:204px;top:222.0px;line-height:16px;font-size:11.1px;color:#111;font-weight:bold;white-space:nowrap;text-align:right;">Время (UTC)</div>
<div style="position:absolute;right:204px;top:239.0px;line-height:16px;font-size:11.1px;color:#111;font-weight:bold;white-space:nowrap;text-align:right;">Прочитано</div>
<div style="position:absolute;right:204px;top:256.0px;line-height:16px;font-size:11.1px;color:#111;font-weight:bold;white-space:nowrap;text-align:right;">Абонент</div>
<div style="position:absolute;right:204px;top:273.0px;line-height:16px;font-size:11.1px;color:#111;font-weight:bold;white-space:nowrap;text-align:right;">Системное</div>
<div style="position:absolute;right:204px;top:290.0px;line-height:16px;font-size:11.1px;color:#111;font-weight:bold;white-space:nowrap;text-align:right;">сообщение</div>
<svg style="position:absolute;left:1724px;top:171px" width="16" height="16" viewBox="0 0 16 16"><rect x="0" y="0" width="16" height="16" rx="3" fill="#2f86ea"/><path d="M8 3 C10.9 3 13 5 13 7.8 C13 10.6 10.9 12.6 8 12.6 C7.2 12.6 6.5 12.45 5.9 12.2 L3.4 13 L4.1 10.8 C3.4 10 3 9 3 7.8 C3 5 5.1 3 8 3 Z" fill="#f0f0f0"/></svg>
<div style="position:absolute;left:1744px;top:171.0px;line-height:16px;font-size:11.1px;color:#2a45cc;font-weight:normal;white-space:nowrap;letter-spacing:0.193px;">Signal</div>
<svg style="position:absolute;left:1725px;top:189px" width="13" height="13" viewBox="0 0 13 13"><circle cx="6.5" cy="6.5" r="6" fill="#3bb54a"/><path d="M4 9 L9 4 M5 4 H9 V8" fill="none" stroke="#fff" stroke-width="1.5"/></svg>
<div style="position:absolute;left:1744px;top:188.0px;line-height:16px;font-size:11.1px;color:#111;font-weight:normal;white-space:nowrap;letter-spacing:0.746px;">Outgoing</div>
<svg style="position:absolute;left:1724px;top:205px" width="17" height="15" viewBox="0 0 17 15"><path d="M6.6 10.6 C3.5 10.2 0.8 8.3 0.8 5.7 C0.8 2.8 4.1 0.6 8.2 0.6 C12.3 0.6 15.6 2.8 15.6 5.7 C15.6 8.6 12.3 10.8 8.2 10.8 L5.2 13.6 Z" fill="none" stroke="#1aa3e8" stroke-width="1.15" stroke-linejoin="round"/><circle cx="5.3" cy="5.6" r="0.85" fill="#1aa3e8"/><circle cx="8.2" cy="5.6" r="0.85" fill="#1aa3e8"/><circle cx="11.1" cy="5.6" r="0.85" fill="#1aa3e8"/></svg>
<div style="position:absolute;left:1744px;top:205.0px;line-height:16px;font-size:11.1px;color:#111;font-weight:normal;white-space:nowrap;">Signal message</div>
<div style="position:absolute;left:1725px;top:222.0px;line-height:16px;font-size:11.1px;color:#111;font-weight:normal;white-space:nowrap;letter-spacing:-0.130px;">13/10/2020 11:24:42 am (UTC+0)</div>
<svg style="position:absolute;left:1725px;top:242px" width="14" height="10" viewBox="0 0 14 10"><rect x="0" y="0" width="14" height="10" fill="#f7dd87"/><path d="M0.5 0.5 L7 5.5 L13.5 0.5 M0.5 9.5 L5 5 M13.5 9.5 L9 5" fill="none" stroke="#fff" stroke-width="0.9"/></svg>
<div style="position:absolute;left:1725px;top:256.0px;line-height:16px;font-size:11.1px;color:#111;font-weight:normal;white-space:nowrap;">+7916</div>
<div style="position:absolute;left:1758px;top:257px;width:17px;height:14px;background:#e2e2e2;filter:blur(2px)"></div>
<div style="position:absolute;left:1775px;top:256.0px;line-height:16px;font-size:11.1px;color:#111;font-weight:normal;white-space:nowrap;">7525</div>
<div style="position:absolute;left:1725px;top:273.0px;line-height:16px;font-size:11.1px;color:#111;font-weight:normal;white-space:nowrap;">11</div>
<div style="position:absolute;left:99px;top:1022.0px;line-height:16px;font-size:11px;color:#111;font-weight:normal;white-space:nowrap;white-space:pre;letter-spacing:0.009px;">Всего: 9,659   Отфильтровано: 9,659   Выбрано: 1</div>
<div style="position:absolute;right:29px;top:1022.0px;line-height:16px;font-size:11.1px;color:#111;font-weight:normal;white-space:nowrap;text-align:right;">У вас есть 3 новых уведомлений</div>
<svg style="position:absolute;left:1900px;top:1021px" width="14" height="16" viewBox="0 0 14 16"><path d="M7 1.5 C4 1.5 3 4 3 6.5 V10 L1 12.5 H13 L11 10 V6.5 C11 4 10 1.5 7 1.5 Z" fill="none" stroke="#2aa5e0" stroke-width="1.5"/><path d="M5.5 14 Q7 15.5 8.5 14" fill="none" stroke="#2aa5e0" stroke-width="1.3"/></svg>
</body></html>
